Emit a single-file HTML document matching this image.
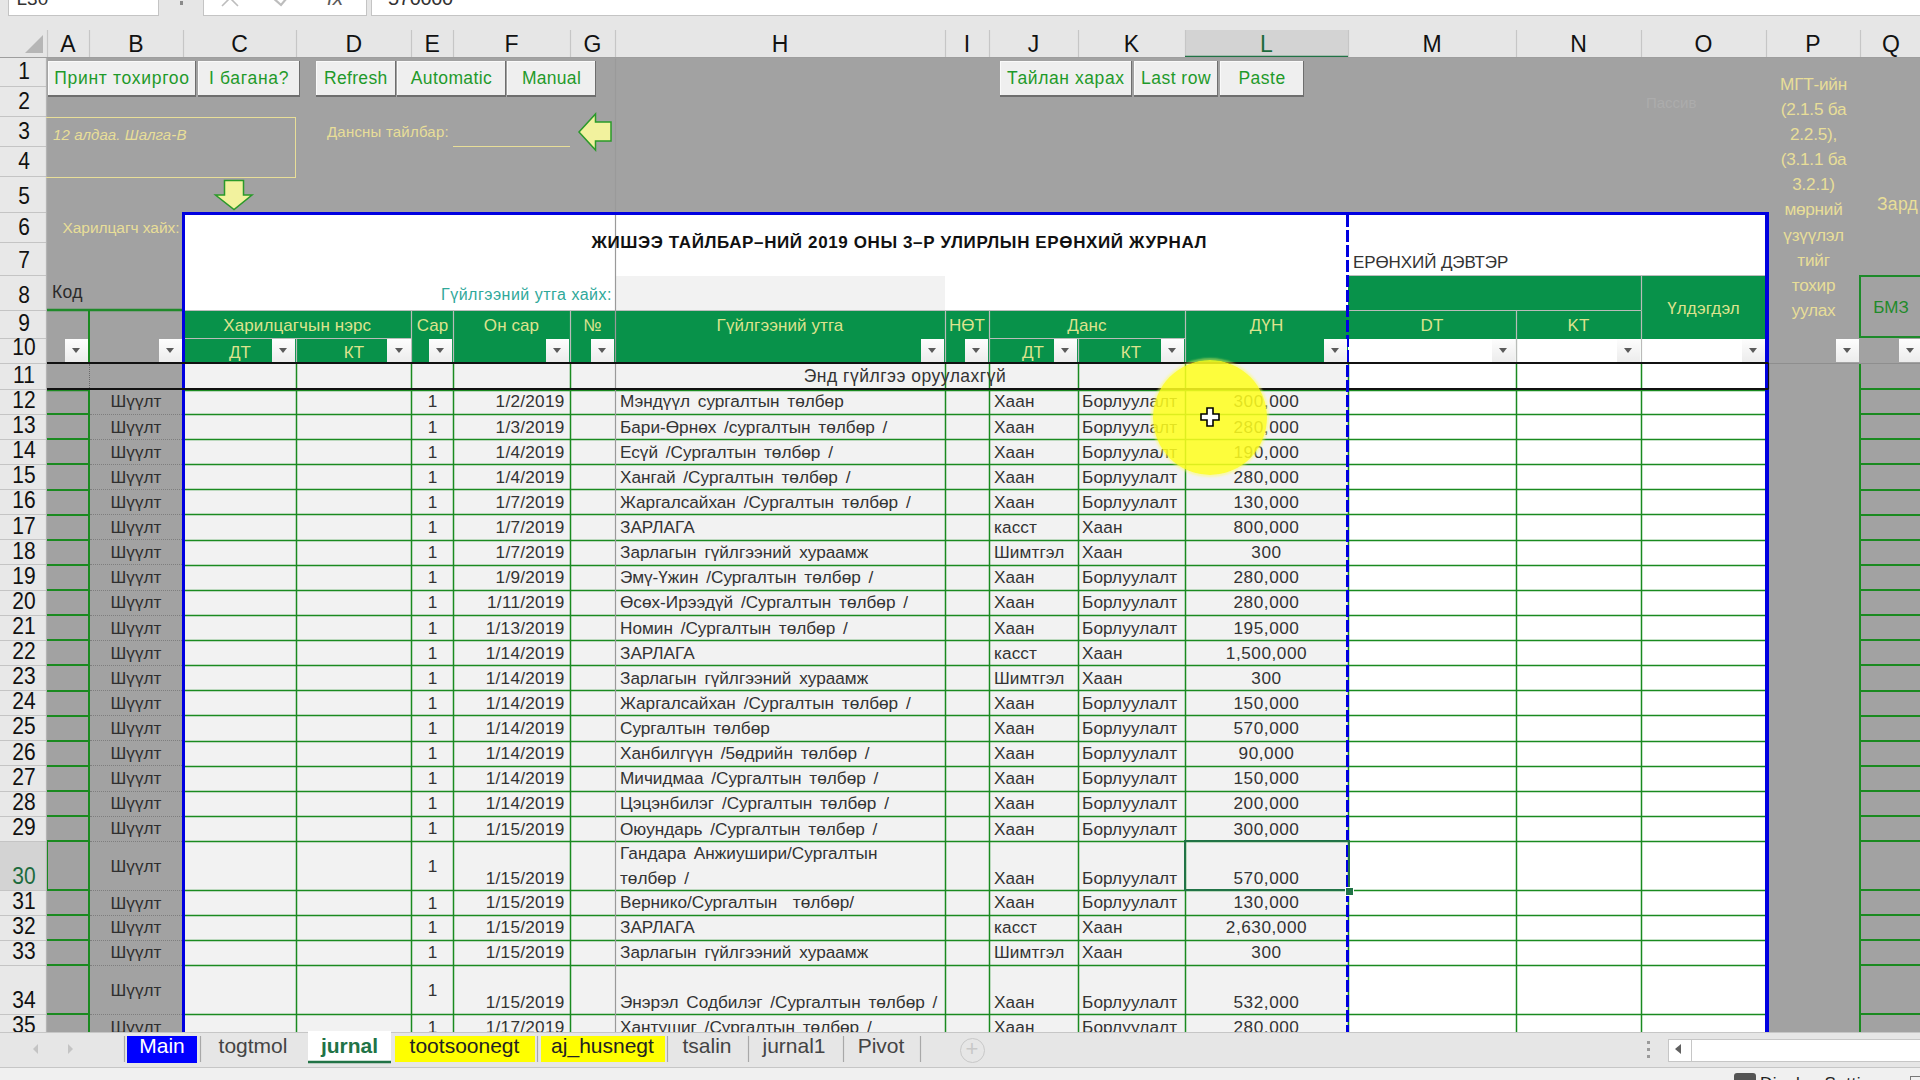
<!DOCTYPE html><html><head><meta charset="utf-8"><style>html,body{margin:0;padding:0;}body{width:1920px;height:1080px;overflow:hidden;position:relative;background:#e6e6e6;font-family:"Liberation Sans", sans-serif;}</style></head><body>
<div style="position:absolute;left:0.0px;top:0.0px;width:1920.0px;height:30.0px;background:#e6e6e6;"></div>
<div style="position:absolute;left:7.5px;top:-6px;width:149px;height:20px;background:#fff;border:1px solid #c4c4c4;"></div>
<div style="position:absolute;left:16.5px;top:-11.1px;font-size:19px;line-height:19px;color:#333;font-weight:normal;letter-spacing:0px;word-spacing:0px;white-space:nowrap;">L30</div>
<div style="position:absolute;left:179.5px;top:1.0px;width:3.5px;height:3.5px;background:#8a8a8a;"></div>
<div style="position:absolute;left:203px;top:-6px;width:162px;height:20px;background:#fff;border:1px solid #c4c4c4;"></div>
<svg style="position:absolute;left:0;top:0" width="400" height="20"><path d="M222,-10 L238,6 M238,-10 L222,6" stroke="#bdbdbd" stroke-width="1.6" fill="none"/><path d="M272,-3 L281,5 L292,-8" stroke="#bdbdbd" stroke-width="2.2" fill="none"/></svg>
<div style="position:absolute;left:327.0px;top:-12.8px;font-size:21px;line-height:21px;color:#5a5a5a;font-weight:normal;letter-spacing:0px;word-spacing:0px;white-space:nowrap;font-family:"Liberation Serif",serif;"><i>fx</i></div>
<div style="position:absolute;left:371px;top:-6px;width:1560px;height:20px;background:#fff;border:1px solid #c4c4c4;"></div>
<div style="position:absolute;left:388.0px;top:-11.9px;font-size:20px;line-height:20px;color:#333;font-weight:normal;letter-spacing:-0.3px;word-spacing:0px;white-space:nowrap;">570000</div>
<div style="position:absolute;left:0.0px;top:30.0px;width:1920.0px;height:28.0px;background:#e6e6e6;"></div>
<div style="position:absolute;left:1185.0px;top:30.0px;width:163.0px;height:28.0px;background:#d3d3d3;"></div>
<svg style="position:absolute;left:0;top:0" width="1920" height="1080"><line x1="89.50" y1="30.00" x2="89.50" y2="58.00" stroke="#c6c6c6" stroke-width="1.2"/></svg>
<div style="position:absolute;left:8.0px;width:120px;text-align:center;top:33.0px;font-size:23px;line-height:23px;color:#111;font-weight:normal;letter-spacing:0px;word-spacing:0px;white-space:nowrap;">A</div>
<svg style="position:absolute;left:0;top:0" width="1920" height="1080"><line x1="183.50" y1="30.00" x2="183.50" y2="58.00" stroke="#c6c6c6" stroke-width="1.2"/></svg>
<div style="position:absolute;left:76.0px;width:120px;text-align:center;top:33.0px;font-size:23px;line-height:23px;color:#111;font-weight:normal;letter-spacing:0px;word-spacing:0px;white-space:nowrap;">B</div>
<svg style="position:absolute;left:0;top:0" width="1920" height="1080"><line x1="296.50" y1="30.00" x2="296.50" y2="58.00" stroke="#c6c6c6" stroke-width="1.2"/></svg>
<div style="position:absolute;left:179.5px;width:120px;text-align:center;top:33.0px;font-size:23px;line-height:23px;color:#111;font-weight:normal;letter-spacing:0px;word-spacing:0px;white-space:nowrap;">C</div>
<svg style="position:absolute;left:0;top:0" width="1920" height="1080"><line x1="411.50" y1="30.00" x2="411.50" y2="58.00" stroke="#c6c6c6" stroke-width="1.2"/></svg>
<div style="position:absolute;left:293.8px;width:120px;text-align:center;top:33.0px;font-size:23px;line-height:23px;color:#111;font-weight:normal;letter-spacing:0px;word-spacing:0px;white-space:nowrap;">D</div>
<svg style="position:absolute;left:0;top:0" width="1920" height="1080"><line x1="453.50" y1="30.00" x2="453.50" y2="58.00" stroke="#c6c6c6" stroke-width="1.2"/></svg>
<div style="position:absolute;left:372.2px;width:120px;text-align:center;top:33.0px;font-size:23px;line-height:23px;color:#111;font-weight:normal;letter-spacing:0px;word-spacing:0px;white-space:nowrap;">E</div>
<svg style="position:absolute;left:0;top:0" width="1920" height="1080"><line x1="570.50" y1="30.00" x2="570.50" y2="58.00" stroke="#c6c6c6" stroke-width="1.2"/></svg>
<div style="position:absolute;left:451.5px;width:120px;text-align:center;top:33.0px;font-size:23px;line-height:23px;color:#111;font-weight:normal;letter-spacing:0px;word-spacing:0px;white-space:nowrap;">F</div>
<svg style="position:absolute;left:0;top:0" width="1920" height="1080"><line x1="615.50" y1="30.00" x2="615.50" y2="58.00" stroke="#c6c6c6" stroke-width="1.2"/></svg>
<div style="position:absolute;left:532.5px;width:120px;text-align:center;top:33.0px;font-size:23px;line-height:23px;color:#111;font-weight:normal;letter-spacing:0px;word-spacing:0px;white-space:nowrap;">G</div>
<svg style="position:absolute;left:0;top:0" width="1920" height="1080"><line x1="945.50" y1="30.00" x2="945.50" y2="58.00" stroke="#c6c6c6" stroke-width="1.2"/></svg>
<div style="position:absolute;left:720.0px;width:120px;text-align:center;top:33.0px;font-size:23px;line-height:23px;color:#111;font-weight:normal;letter-spacing:0px;word-spacing:0px;white-space:nowrap;">H</div>
<svg style="position:absolute;left:0;top:0" width="1920" height="1080"><line x1="989.50" y1="30.00" x2="989.50" y2="58.00" stroke="#c6c6c6" stroke-width="1.2"/></svg>
<div style="position:absolute;left:907.0px;width:120px;text-align:center;top:33.0px;font-size:23px;line-height:23px;color:#111;font-weight:normal;letter-spacing:0px;word-spacing:0px;white-space:nowrap;">I</div>
<svg style="position:absolute;left:0;top:0" width="1920" height="1080"><line x1="1078.50" y1="30.00" x2="1078.50" y2="58.00" stroke="#c6c6c6" stroke-width="1.2"/></svg>
<div style="position:absolute;left:973.5px;width:120px;text-align:center;top:33.0px;font-size:23px;line-height:23px;color:#111;font-weight:normal;letter-spacing:0px;word-spacing:0px;white-space:nowrap;">J</div>
<svg style="position:absolute;left:0;top:0" width="1920" height="1080"><line x1="1185.50" y1="30.00" x2="1185.50" y2="58.00" stroke="#c6c6c6" stroke-width="1.2"/></svg>
<div style="position:absolute;left:1071.5px;width:120px;text-align:center;top:33.0px;font-size:23px;line-height:23px;color:#111;font-weight:normal;letter-spacing:0px;word-spacing:0px;white-space:nowrap;">K</div>
<svg style="position:absolute;left:0;top:0" width="1920" height="1080"><line x1="1348.50" y1="30.00" x2="1348.50" y2="58.00" stroke="#c6c6c6" stroke-width="1.2"/></svg>
<div style="position:absolute;left:1206.5px;width:120px;text-align:center;top:33.0px;font-size:23px;line-height:23px;color:#1d6b3d;font-weight:normal;letter-spacing:0px;word-spacing:0px;white-space:nowrap;">L</div>
<svg style="position:absolute;left:0;top:0" width="1920" height="1080"><line x1="1516.50" y1="30.00" x2="1516.50" y2="58.00" stroke="#c6c6c6" stroke-width="1.2"/></svg>
<div style="position:absolute;left:1372.0px;width:120px;text-align:center;top:33.0px;font-size:23px;line-height:23px;color:#111;font-weight:normal;letter-spacing:0px;word-spacing:0px;white-space:nowrap;">M</div>
<svg style="position:absolute;left:0;top:0" width="1920" height="1080"><line x1="1641.50" y1="30.00" x2="1641.50" y2="58.00" stroke="#c6c6c6" stroke-width="1.2"/></svg>
<div style="position:absolute;left:1518.5px;width:120px;text-align:center;top:33.0px;font-size:23px;line-height:23px;color:#111;font-weight:normal;letter-spacing:0px;word-spacing:0px;white-space:nowrap;">N</div>
<svg style="position:absolute;left:0;top:0" width="1920" height="1080"><line x1="1766.50" y1="30.00" x2="1766.50" y2="58.00" stroke="#c6c6c6" stroke-width="1.2"/></svg>
<div style="position:absolute;left:1643.5px;width:120px;text-align:center;top:33.0px;font-size:23px;line-height:23px;color:#111;font-weight:normal;letter-spacing:0px;word-spacing:0px;white-space:nowrap;">O</div>
<svg style="position:absolute;left:0;top:0" width="1920" height="1080"><line x1="1860.50" y1="30.00" x2="1860.50" y2="58.00" stroke="#c6c6c6" stroke-width="1.2"/></svg>
<div style="position:absolute;left:1753.0px;width:120px;text-align:center;top:33.0px;font-size:23px;line-height:23px;color:#111;font-weight:normal;letter-spacing:0px;word-spacing:0px;white-space:nowrap;">P</div>
<svg style="position:absolute;left:0;top:0" width="1920" height="1080"><line x1="1922.50" y1="30.00" x2="1922.50" y2="58.00" stroke="#c6c6c6" stroke-width="1.2"/></svg>
<div style="position:absolute;left:1831.0px;width:120px;text-align:center;top:33.0px;font-size:23px;line-height:23px;color:#111;font-weight:normal;letter-spacing:0px;word-spacing:0px;white-space:nowrap;">Q</div>
<svg style="position:absolute;left:0;top:0" width="1920" height="1080"><line x1="47.50" y1="30.00" x2="47.50" y2="58.00" stroke="#c6c6c6" stroke-width="1.2"/><line x1="1185.00" y1="57.00" x2="1348.00" y2="57.00" stroke="#217346" stroke-width="2.5"/></svg>
<div style="position:absolute;left:25px;top:35px;width:0;height:0;border-left:18px solid transparent;border-bottom:18px solid #b6b6b6;"></div>
<svg style="position:absolute;left:0;top:0" width="1920" height="1080"><line x1="0.00" y1="58.00" x2="1920.00" y2="58.00" stroke="#9e9e9e" stroke-width="2"/></svg>
<div style="position:absolute;left:47.0px;top:58.0px;width:1873.0px;height:974.0px;background:#a2a2a2;"></div>
<div style="position:absolute;left:0.0px;top:58.0px;width:46.5px;height:974.0px;background:#e8e8e8;"></div>
<div style="position:absolute;left:0.0px;top:841.2px;width:46.5px;height:49.2px;background:#d3d3d3;"></div>
<svg style="position:absolute;left:0;top:0" width="1920" height="1080"><line x1="0.00" y1="86.50" x2="46.50" y2="86.50" stroke="#c4c4c4" stroke-width="1.2"/></svg>
<div style="position:absolute;left:-6.0px;width:60px;text-align:center;top:59.9px;font-size:23.3px;line-height:23.3px;color:#111;font-weight:normal;letter-spacing:0px;word-spacing:0px;white-space:nowrap;transform:scaleX(0.9);">1</div>
<svg style="position:absolute;left:0;top:0" width="1920" height="1080"><line x1="0.00" y1="116.50" x2="46.50" y2="116.50" stroke="#c4c4c4" stroke-width="1.2"/></svg>
<div style="position:absolute;left:-6.0px;width:60px;text-align:center;top:89.9px;font-size:23.3px;line-height:23.3px;color:#111;font-weight:normal;letter-spacing:0px;word-spacing:0px;white-space:nowrap;transform:scaleX(0.9);">2</div>
<svg style="position:absolute;left:0;top:0" width="1920" height="1080"><line x1="0.00" y1="146.50" x2="46.50" y2="146.50" stroke="#c4c4c4" stroke-width="1.2"/></svg>
<div style="position:absolute;left:-6.0px;width:60px;text-align:center;top:119.9px;font-size:23.3px;line-height:23.3px;color:#111;font-weight:normal;letter-spacing:0px;word-spacing:0px;white-space:nowrap;transform:scaleX(0.9);">3</div>
<svg style="position:absolute;left:0;top:0" width="1920" height="1080"><line x1="0.00" y1="176.50" x2="46.50" y2="176.50" stroke="#c4c4c4" stroke-width="1.2"/></svg>
<div style="position:absolute;left:-6.0px;width:60px;text-align:center;top:149.9px;font-size:23.3px;line-height:23.3px;color:#111;font-weight:normal;letter-spacing:0px;word-spacing:0px;white-space:nowrap;transform:scaleX(0.9);">4</div>
<svg style="position:absolute;left:0;top:0" width="1920" height="1080"><line x1="0.00" y1="212.50" x2="46.50" y2="212.50" stroke="#c4c4c4" stroke-width="1.2"/></svg>
<div style="position:absolute;left:-6.0px;width:60px;text-align:center;top:185.4px;font-size:23.3px;line-height:23.3px;color:#111;font-weight:normal;letter-spacing:0px;word-spacing:0px;white-space:nowrap;transform:scaleX(0.9);">5</div>
<svg style="position:absolute;left:0;top:0" width="1920" height="1080"><line x1="0.00" y1="242.50" x2="46.50" y2="242.50" stroke="#c4c4c4" stroke-width="1.2"/></svg>
<div style="position:absolute;left:-6.0px;width:60px;text-align:center;top:215.9px;font-size:23.3px;line-height:23.3px;color:#111;font-weight:normal;letter-spacing:0px;word-spacing:0px;white-space:nowrap;transform:scaleX(0.9);">6</div>
<svg style="position:absolute;left:0;top:0" width="1920" height="1080"><line x1="0.00" y1="275.50" x2="46.50" y2="275.50" stroke="#c4c4c4" stroke-width="1.2"/></svg>
<div style="position:absolute;left:-6.0px;width:60px;text-align:center;top:248.9px;font-size:23.3px;line-height:23.3px;color:#111;font-weight:normal;letter-spacing:0px;word-spacing:0px;white-space:nowrap;transform:scaleX(0.9);">7</div>
<svg style="position:absolute;left:0;top:0" width="1920" height="1080"><line x1="0.00" y1="310.50" x2="46.50" y2="310.50" stroke="#c4c4c4" stroke-width="1.2"/></svg>
<div style="position:absolute;left:-6.0px;width:60px;text-align:center;top:283.9px;font-size:23.3px;line-height:23.3px;color:#111;font-weight:normal;letter-spacing:0px;word-spacing:0px;white-space:nowrap;transform:scaleX(0.9);">8</div>
<svg style="position:absolute;left:0;top:0" width="1920" height="1080"><line x1="0.00" y1="338.50" x2="46.50" y2="338.50" stroke="#c4c4c4" stroke-width="1.2"/></svg>
<div style="position:absolute;left:-6.0px;width:60px;text-align:center;top:311.9px;font-size:23.3px;line-height:23.3px;color:#111;font-weight:normal;letter-spacing:0px;word-spacing:0px;white-space:nowrap;transform:scaleX(0.9);">9</div>
<svg style="position:absolute;left:0;top:0" width="1920" height="1080"><line x1="0.00" y1="363.50" x2="46.50" y2="363.50" stroke="#c4c4c4" stroke-width="1.2"/></svg>
<div style="position:absolute;left:-6.0px;width:60px;text-align:center;top:336.4px;font-size:23.3px;line-height:23.3px;color:#111;font-weight:normal;letter-spacing:0px;word-spacing:0px;white-space:nowrap;transform:scaleX(0.9);">10</div>
<svg style="position:absolute;left:0;top:0" width="1920" height="1080"><line x1="0.00" y1="389.50" x2="46.50" y2="389.50" stroke="#c4c4c4" stroke-width="1.2"/></svg>
<div style="position:absolute;left:-6.0px;width:60px;text-align:center;top:363.7px;font-size:23.3px;line-height:23.3px;color:#111;font-weight:normal;letter-spacing:0px;word-spacing:0px;white-space:nowrap;transform:scaleX(0.9);">11</div>
<svg style="position:absolute;left:0;top:0" width="1920" height="1080"><line x1="0.00" y1="414.50" x2="46.50" y2="414.50" stroke="#c4c4c4" stroke-width="1.2"/></svg>
<div style="position:absolute;left:-6.0px;width:60px;text-align:center;top:388.9px;font-size:23.3px;line-height:23.3px;color:#111;font-weight:normal;letter-spacing:0px;word-spacing:0px;white-space:nowrap;transform:scaleX(0.9);">12</div>
<svg style="position:absolute;left:0;top:0" width="1920" height="1080"><line x1="0.00" y1="439.50" x2="46.50" y2="439.50" stroke="#c4c4c4" stroke-width="1.2"/></svg>
<div style="position:absolute;left:-6.0px;width:60px;text-align:center;top:414.0px;font-size:23.3px;line-height:23.3px;color:#111;font-weight:normal;letter-spacing:0px;word-spacing:0px;white-space:nowrap;transform:scaleX(0.9);">13</div>
<svg style="position:absolute;left:0;top:0" width="1920" height="1080"><line x1="0.00" y1="464.50" x2="46.50" y2="464.50" stroke="#c4c4c4" stroke-width="1.2"/></svg>
<div style="position:absolute;left:-6.0px;width:60px;text-align:center;top:439.1px;font-size:23.3px;line-height:23.3px;color:#111;font-weight:normal;letter-spacing:0px;word-spacing:0px;white-space:nowrap;transform:scaleX(0.9);">14</div>
<svg style="position:absolute;left:0;top:0" width="1920" height="1080"><line x1="0.00" y1="489.50" x2="46.50" y2="489.50" stroke="#c4c4c4" stroke-width="1.2"/></svg>
<div style="position:absolute;left:-6.0px;width:60px;text-align:center;top:464.2px;font-size:23.3px;line-height:23.3px;color:#111;font-weight:normal;letter-spacing:0px;word-spacing:0px;white-space:nowrap;transform:scaleX(0.9);">15</div>
<svg style="position:absolute;left:0;top:0" width="1920" height="1080"><line x1="0.00" y1="514.50" x2="46.50" y2="514.50" stroke="#c4c4c4" stroke-width="1.2"/></svg>
<div style="position:absolute;left:-6.0px;width:60px;text-align:center;top:489.4px;font-size:23.3px;line-height:23.3px;color:#111;font-weight:normal;letter-spacing:0px;word-spacing:0px;white-space:nowrap;transform:scaleX(0.9);">16</div>
<svg style="position:absolute;left:0;top:0" width="1920" height="1080"><line x1="0.00" y1="539.50" x2="46.50" y2="539.50" stroke="#c4c4c4" stroke-width="1.2"/></svg>
<div style="position:absolute;left:-6.0px;width:60px;text-align:center;top:514.5px;font-size:23.3px;line-height:23.3px;color:#111;font-weight:normal;letter-spacing:0px;word-spacing:0px;white-space:nowrap;transform:scaleX(0.9);">17</div>
<svg style="position:absolute;left:0;top:0" width="1920" height="1080"><line x1="0.00" y1="564.50" x2="46.50" y2="564.50" stroke="#c4c4c4" stroke-width="1.2"/></svg>
<div style="position:absolute;left:-6.0px;width:60px;text-align:center;top:539.6px;font-size:23.3px;line-height:23.3px;color:#111;font-weight:normal;letter-spacing:0px;word-spacing:0px;white-space:nowrap;transform:scaleX(0.9);">18</div>
<svg style="position:absolute;left:0;top:0" width="1920" height="1080"><line x1="0.00" y1="590.50" x2="46.50" y2="590.50" stroke="#c4c4c4" stroke-width="1.2"/></svg>
<div style="position:absolute;left:-6.0px;width:60px;text-align:center;top:564.7px;font-size:23.3px;line-height:23.3px;color:#111;font-weight:normal;letter-spacing:0px;word-spacing:0px;white-space:nowrap;transform:scaleX(0.9);">19</div>
<svg style="position:absolute;left:0;top:0" width="1920" height="1080"><line x1="0.00" y1="615.50" x2="46.50" y2="615.50" stroke="#c4c4c4" stroke-width="1.2"/></svg>
<div style="position:absolute;left:-6.0px;width:60px;text-align:center;top:589.8px;font-size:23.3px;line-height:23.3px;color:#111;font-weight:normal;letter-spacing:0px;word-spacing:0px;white-space:nowrap;transform:scaleX(0.9);">20</div>
<svg style="position:absolute;left:0;top:0" width="1920" height="1080"><line x1="0.00" y1="640.50" x2="46.50" y2="640.50" stroke="#c4c4c4" stroke-width="1.2"/></svg>
<div style="position:absolute;left:-6.0px;width:60px;text-align:center;top:615.0px;font-size:23.3px;line-height:23.3px;color:#111;font-weight:normal;letter-spacing:0px;word-spacing:0px;white-space:nowrap;transform:scaleX(0.9);">21</div>
<svg style="position:absolute;left:0;top:0" width="1920" height="1080"><line x1="0.00" y1="665.50" x2="46.50" y2="665.50" stroke="#c4c4c4" stroke-width="1.2"/></svg>
<div style="position:absolute;left:-6.0px;width:60px;text-align:center;top:640.1px;font-size:23.3px;line-height:23.3px;color:#111;font-weight:normal;letter-spacing:0px;word-spacing:0px;white-space:nowrap;transform:scaleX(0.9);">22</div>
<svg style="position:absolute;left:0;top:0" width="1920" height="1080"><line x1="0.00" y1="690.50" x2="46.50" y2="690.50" stroke="#c4c4c4" stroke-width="1.2"/></svg>
<div style="position:absolute;left:-6.0px;width:60px;text-align:center;top:665.2px;font-size:23.3px;line-height:23.3px;color:#111;font-weight:normal;letter-spacing:0px;word-spacing:0px;white-space:nowrap;transform:scaleX(0.9);">23</div>
<svg style="position:absolute;left:0;top:0" width="1920" height="1080"><line x1="0.00" y1="715.50" x2="46.50" y2="715.50" stroke="#c4c4c4" stroke-width="1.2"/></svg>
<div style="position:absolute;left:-6.0px;width:60px;text-align:center;top:690.3px;font-size:23.3px;line-height:23.3px;color:#111;font-weight:normal;letter-spacing:0px;word-spacing:0px;white-space:nowrap;transform:scaleX(0.9);">24</div>
<svg style="position:absolute;left:0;top:0" width="1920" height="1080"><line x1="0.00" y1="740.50" x2="46.50" y2="740.50" stroke="#c4c4c4" stroke-width="1.2"/></svg>
<div style="position:absolute;left:-6.0px;width:60px;text-align:center;top:715.4px;font-size:23.3px;line-height:23.3px;color:#111;font-weight:normal;letter-spacing:0px;word-spacing:0px;white-space:nowrap;transform:scaleX(0.9);">25</div>
<svg style="position:absolute;left:0;top:0" width="1920" height="1080"><line x1="0.00" y1="765.50" x2="46.50" y2="765.50" stroke="#c4c4c4" stroke-width="1.2"/></svg>
<div style="position:absolute;left:-6.0px;width:60px;text-align:center;top:740.6px;font-size:23.3px;line-height:23.3px;color:#111;font-weight:normal;letter-spacing:0px;word-spacing:0px;white-space:nowrap;transform:scaleX(0.9);">26</div>
<svg style="position:absolute;left:0;top:0" width="1920" height="1080"><line x1="0.00" y1="791.50" x2="46.50" y2="791.50" stroke="#c4c4c4" stroke-width="1.2"/></svg>
<div style="position:absolute;left:-6.0px;width:60px;text-align:center;top:765.7px;font-size:23.3px;line-height:23.3px;color:#111;font-weight:normal;letter-spacing:0px;word-spacing:0px;white-space:nowrap;transform:scaleX(0.9);">27</div>
<svg style="position:absolute;left:0;top:0" width="1920" height="1080"><line x1="0.00" y1="816.50" x2="46.50" y2="816.50" stroke="#c4c4c4" stroke-width="1.2"/></svg>
<div style="position:absolute;left:-6.0px;width:60px;text-align:center;top:790.8px;font-size:23.3px;line-height:23.3px;color:#111;font-weight:normal;letter-spacing:0px;word-spacing:0px;white-space:nowrap;transform:scaleX(0.9);">28</div>
<svg style="position:absolute;left:0;top:0" width="1920" height="1080"><line x1="0.00" y1="841.50" x2="46.50" y2="841.50" stroke="#c4c4c4" stroke-width="1.2"/></svg>
<div style="position:absolute;left:-6.0px;width:60px;text-align:center;top:815.9px;font-size:23.3px;line-height:23.3px;color:#111;font-weight:normal;letter-spacing:0px;word-spacing:0px;white-space:nowrap;transform:scaleX(0.9);">29</div>
<svg style="position:absolute;left:0;top:0" width="1920" height="1080"><line x1="0.00" y1="890.50" x2="46.50" y2="890.50" stroke="#c4c4c4" stroke-width="1.2"/></svg>
<div style="position:absolute;left:-6.0px;width:60px;text-align:center;top:865.1px;font-size:23.3px;line-height:23.3px;color:#1d6b3d;font-weight:normal;letter-spacing:0px;word-spacing:0px;white-space:nowrap;transform:scaleX(0.9);">30</div>
<svg style="position:absolute;left:0;top:0" width="1920" height="1080"><line x1="0.00" y1="915.50" x2="46.50" y2="915.50" stroke="#c4c4c4" stroke-width="1.2"/></svg>
<div style="position:absolute;left:-6.0px;width:60px;text-align:center;top:889.9px;font-size:23.3px;line-height:23.3px;color:#111;font-weight:normal;letter-spacing:0px;word-spacing:0px;white-space:nowrap;transform:scaleX(0.9);">31</div>
<svg style="position:absolute;left:0;top:0" width="1920" height="1080"><line x1="0.00" y1="940.50" x2="46.50" y2="940.50" stroke="#c4c4c4" stroke-width="1.2"/></svg>
<div style="position:absolute;left:-6.0px;width:60px;text-align:center;top:914.9px;font-size:23.3px;line-height:23.3px;color:#111;font-weight:normal;letter-spacing:0px;word-spacing:0px;white-space:nowrap;transform:scaleX(0.9);">32</div>
<svg style="position:absolute;left:0;top:0" width="1920" height="1080"><line x1="0.00" y1="965.50" x2="46.50" y2="965.50" stroke="#c4c4c4" stroke-width="1.2"/></svg>
<div style="position:absolute;left:-6.0px;width:60px;text-align:center;top:939.9px;font-size:23.3px;line-height:23.3px;color:#111;font-weight:normal;letter-spacing:0px;word-spacing:0px;white-space:nowrap;transform:scaleX(0.9);">33</div>
<svg style="position:absolute;left:0;top:0" width="1920" height="1080"><line x1="0.00" y1="1014.50" x2="46.50" y2="1014.50" stroke="#c4c4c4" stroke-width="1.2"/></svg>
<div style="position:absolute;left:-6.0px;width:60px;text-align:center;top:989.1px;font-size:23.3px;line-height:23.3px;color:#111;font-weight:normal;letter-spacing:0px;word-spacing:0px;white-space:nowrap;transform:scaleX(0.9);">34</div>
<svg style="position:absolute;left:0;top:0" width="1920" height="1080"><line x1="0.00" y1="1039.50" x2="46.50" y2="1039.50" stroke="#c4c4c4" stroke-width="1.2"/></svg>
<div style="position:absolute;left:-6.0px;width:60px;text-align:center;top:1014.2px;font-size:23.3px;line-height:23.3px;color:#111;font-weight:normal;letter-spacing:0px;word-spacing:0px;white-space:nowrap;transform:scaleX(0.9);">35</div>
<svg style="position:absolute;left:0;top:0" width="1920" height="1080"><line x1="46.50" y1="58.00" x2="46.50" y2="1032.00" stroke="#b4b4b4" stroke-width="1.2"/></svg>
<div style="position:absolute;left:183.0px;top:212.0px;width:1583.0px;height:98.5px;background:#ffffff;"></div>
<div style="position:absolute;left:615.0px;top:275.5px;width:330.0px;height:35.0px;background:#f2f2f2;"></div>
<div style="position:absolute;left:1348.0px;top:275.5px;width:418.0px;height:35.0px;background:#08924a;"></div>
<div style="position:absolute;left:183.0px;top:310.5px;width:1165.0px;height:52.5px;background:#08924a;"></div>
<div style="position:absolute;left:1348.0px;top:310.5px;width:418.0px;height:28.0px;background:#08924a;"></div>
<div style="position:absolute;left:1348.0px;top:338.5px;width:418.0px;height:24.5px;background:#ffffff;"></div>
<div style="position:absolute;left:183.0px;top:363.0px;width:1165.0px;height:669.0px;background:#f2f2f2;"></div>
<div style="position:absolute;left:1348.0px;top:363.0px;width:418.0px;height:669.0px;background:#ffffff;"></div>
<svg style="position:absolute;left:0;top:0" width="1920" height="1080"><line x1="183.00" y1="310.50" x2="1348.00" y2="310.50" stroke="#bdbdbd" stroke-width="1.2"/><line x1="1348.00" y1="275.50" x2="1766.00" y2="275.50" stroke="#bdbdbd" stroke-width="1.2"/><line x1="1348.00" y1="310.50" x2="1641.00" y2="310.50" stroke="#b9bcb9" stroke-width="1.2"/><line x1="183.00" y1="338.50" x2="411.50" y2="338.50" stroke="#b9bcb9" stroke-width="1.2"/><line x1="989.00" y1="338.50" x2="1185.00" y2="338.50" stroke="#b9bcb9" stroke-width="1.2"/><line x1="411.50" y1="310.50" x2="411.50" y2="363.00" stroke="#b9bcb9" stroke-width="1.2"/><line x1="453.50" y1="310.50" x2="453.50" y2="363.00" stroke="#b9bcb9" stroke-width="1.2"/><line x1="570.50" y1="310.50" x2="570.50" y2="363.00" stroke="#b9bcb9" stroke-width="1.2"/><line x1="945.50" y1="310.50" x2="945.50" y2="363.00" stroke="#b9bcb9" stroke-width="1.2"/><line x1="989.50" y1="310.50" x2="989.50" y2="363.00" stroke="#b9bcb9" stroke-width="1.2"/><line x1="1185.50" y1="310.50" x2="1185.50" y2="363.00" stroke="#b9bcb9" stroke-width="1.2"/><line x1="1516.50" y1="310.50" x2="1516.50" y2="363.00" stroke="#b9bcb9" stroke-width="1.2"/><line x1="1641.50" y1="310.50" x2="1641.50" y2="363.00" stroke="#b9bcb9" stroke-width="1.2"/><line x1="296.50" y1="338.50" x2="296.50" y2="363.00" stroke="#b9bcb9" stroke-width="1.2"/><line x1="1078.50" y1="338.50" x2="1078.50" y2="363.00" stroke="#b9bcb9" stroke-width="1.2"/><line x1="1641.50" y1="275.50" x2="1641.50" y2="310.50" stroke="#b9bcb9" stroke-width="1.2"/><line x1="1516.50" y1="338.50" x2="1516.50" y2="363.00" stroke="#b9bcb9" stroke-width="1.2"/><line x1="296.50" y1="363.00" x2="296.50" y2="1032.00" stroke="#1a8a20" stroke-width="1.5"/><line x1="411.50" y1="363.00" x2="411.50" y2="1032.00" stroke="#1a8a20" stroke-width="1.5"/><line x1="453.50" y1="363.00" x2="453.50" y2="1032.00" stroke="#1a8a20" stroke-width="1.5"/><line x1="570.50" y1="363.00" x2="570.50" y2="1032.00" stroke="#1a8a20" stroke-width="1.5"/><line x1="945.50" y1="363.00" x2="945.50" y2="1032.00" stroke="#1a8a20" stroke-width="1.5"/><line x1="989.50" y1="363.00" x2="989.50" y2="1032.00" stroke="#1a8a20" stroke-width="1.5"/><line x1="1078.50" y1="363.00" x2="1078.50" y2="1032.00" stroke="#1a8a20" stroke-width="1.5"/><line x1="1185.50" y1="363.00" x2="1185.50" y2="1032.00" stroke="#1a8a20" stroke-width="1.5"/><line x1="1348.50" y1="363.00" x2="1348.50" y2="1032.00" stroke="#1a8a20" stroke-width="1.5"/><line x1="1516.50" y1="363.00" x2="1516.50" y2="1032.00" stroke="#1a8a20" stroke-width="1.5"/><line x1="1641.50" y1="363.00" x2="1641.50" y2="1032.00" stroke="#1a8a20" stroke-width="1.5"/><line x1="183.00" y1="414.50" x2="1766.00" y2="414.50" stroke="#1a8a20" stroke-width="1.5"/><line x1="183.00" y1="439.50" x2="1766.00" y2="439.50" stroke="#1a8a20" stroke-width="1.5"/><line x1="183.00" y1="464.50" x2="1766.00" y2="464.50" stroke="#1a8a20" stroke-width="1.5"/><line x1="183.00" y1="489.50" x2="1766.00" y2="489.50" stroke="#1a8a20" stroke-width="1.5"/><line x1="183.00" y1="514.50" x2="1766.00" y2="514.50" stroke="#1a8a20" stroke-width="1.5"/><line x1="183.00" y1="540.50" x2="1766.00" y2="540.50" stroke="#1a8a20" stroke-width="1.5"/><line x1="183.00" y1="565.50" x2="1766.00" y2="565.50" stroke="#1a8a20" stroke-width="1.5"/><line x1="183.00" y1="590.50" x2="1766.00" y2="590.50" stroke="#1a8a20" stroke-width="1.5"/><line x1="183.00" y1="615.50" x2="1766.00" y2="615.50" stroke="#1a8a20" stroke-width="1.5"/><line x1="183.00" y1="640.50" x2="1766.00" y2="640.50" stroke="#1a8a20" stroke-width="1.5"/><line x1="183.00" y1="665.50" x2="1766.00" y2="665.50" stroke="#1a8a20" stroke-width="1.5"/><line x1="183.00" y1="690.50" x2="1766.00" y2="690.50" stroke="#1a8a20" stroke-width="1.5"/><line x1="183.00" y1="715.50" x2="1766.00" y2="715.50" stroke="#1a8a20" stroke-width="1.5"/><line x1="183.00" y1="741.50" x2="1766.00" y2="741.50" stroke="#1a8a20" stroke-width="1.5"/><line x1="183.00" y1="766.50" x2="1766.00" y2="766.50" stroke="#1a8a20" stroke-width="1.5"/><line x1="183.00" y1="791.50" x2="1766.00" y2="791.50" stroke="#1a8a20" stroke-width="1.5"/><line x1="183.00" y1="816.50" x2="1766.00" y2="816.50" stroke="#1a8a20" stroke-width="1.5"/><line x1="183.00" y1="841.50" x2="1766.00" y2="841.50" stroke="#1a8a20" stroke-width="1.5"/><line x1="183.00" y1="890.50" x2="1766.00" y2="890.50" stroke="#1a8a20" stroke-width="1.5"/><line x1="183.00" y1="915.50" x2="1766.00" y2="915.50" stroke="#1a8a20" stroke-width="1.5"/><line x1="183.00" y1="940.50" x2="1766.00" y2="940.50" stroke="#1a8a20" stroke-width="1.5"/><line x1="183.00" y1="965.50" x2="1766.00" y2="965.50" stroke="#1a8a20" stroke-width="1.5"/><line x1="183.00" y1="1014.50" x2="1766.00" y2="1014.50" stroke="#1a8a20" stroke-width="1.5"/><line x1="183.00" y1="390.50" x2="1766.00" y2="390.50" stroke="#1a8a20" stroke-width="1.5"/><line x1="615.50" y1="58.50" x2="615.50" y2="1032.00" stroke="#9a9a9a" stroke-width="1.2"/><line x1="47.00" y1="310.00" x2="183.00" y2="310.00" stroke="#1f8a2a" stroke-width="2.5"/><line x1="89.00" y1="310.50" x2="89.00" y2="363.00" stroke="#1a8a20" stroke-width="2"/><line x1="89.00" y1="389.00" x2="89.00" y2="1032.00" stroke="#1a8a20" stroke-width="2"/><line x1="47.00" y1="414.00" x2="89.00" y2="414.00" stroke="#1a8a20" stroke-width="2"/></svg>
<div style="position:absolute;left:90.0px;top:413.7px;width:92.0px;height:0;border-top:1px dotted #7e7e7e;"></div>
<svg style="position:absolute;left:0;top:0" width="1920" height="1080"><line x1="47.00" y1="439.00" x2="89.00" y2="439.00" stroke="#1a8a20" stroke-width="2"/></svg>
<div style="position:absolute;left:90.0px;top:438.8px;width:92.0px;height:0;border-top:1px dotted #7e7e7e;"></div>
<svg style="position:absolute;left:0;top:0" width="1920" height="1080"><line x1="47.00" y1="464.00" x2="89.00" y2="464.00" stroke="#1a8a20" stroke-width="2"/></svg>
<div style="position:absolute;left:90.0px;top:463.9px;width:92.0px;height:0;border-top:1px dotted #7e7e7e;"></div>
<svg style="position:absolute;left:0;top:0" width="1920" height="1080"><line x1="47.00" y1="490.00" x2="89.00" y2="490.00" stroke="#1a8a20" stroke-width="2"/></svg>
<div style="position:absolute;left:90.0px;top:489.1px;width:92.0px;height:0;border-top:1px dotted #7e7e7e;"></div>
<svg style="position:absolute;left:0;top:0" width="1920" height="1080"><line x1="47.00" y1="515.00" x2="89.00" y2="515.00" stroke="#1a8a20" stroke-width="2"/></svg>
<div style="position:absolute;left:90.0px;top:514.2px;width:92.0px;height:0;border-top:1px dotted #7e7e7e;"></div>
<svg style="position:absolute;left:0;top:0" width="1920" height="1080"><line x1="47.00" y1="540.00" x2="89.00" y2="540.00" stroke="#1a8a20" stroke-width="2"/></svg>
<div style="position:absolute;left:90.0px;top:539.3px;width:92.0px;height:0;border-top:1px dotted #7e7e7e;"></div>
<svg style="position:absolute;left:0;top:0" width="1920" height="1080"><line x1="47.00" y1="565.00" x2="89.00" y2="565.00" stroke="#1a8a20" stroke-width="2"/></svg>
<div style="position:absolute;left:90.0px;top:564.4px;width:92.0px;height:0;border-top:1px dotted #7e7e7e;"></div>
<svg style="position:absolute;left:0;top:0" width="1920" height="1080"><line x1="47.00" y1="590.00" x2="89.00" y2="590.00" stroke="#1a8a20" stroke-width="2"/></svg>
<div style="position:absolute;left:90.0px;top:589.5px;width:92.0px;height:0;border-top:1px dotted #7e7e7e;"></div>
<svg style="position:absolute;left:0;top:0" width="1920" height="1080"><line x1="47.00" y1="615.00" x2="89.00" y2="615.00" stroke="#1a8a20" stroke-width="2"/></svg>
<div style="position:absolute;left:90.0px;top:614.7px;width:92.0px;height:0;border-top:1px dotted #7e7e7e;"></div>
<svg style="position:absolute;left:0;top:0" width="1920" height="1080"><line x1="47.00" y1="640.00" x2="89.00" y2="640.00" stroke="#1a8a20" stroke-width="2"/></svg>
<div style="position:absolute;left:90.0px;top:639.8px;width:92.0px;height:0;border-top:1px dotted #7e7e7e;"></div>
<svg style="position:absolute;left:0;top:0" width="1920" height="1080"><line x1="47.00" y1="665.00" x2="89.00" y2="665.00" stroke="#1a8a20" stroke-width="2"/></svg>
<div style="position:absolute;left:90.0px;top:664.9px;width:92.0px;height:0;border-top:1px dotted #7e7e7e;"></div>
<svg style="position:absolute;left:0;top:0" width="1920" height="1080"><line x1="47.00" y1="691.00" x2="89.00" y2="691.00" stroke="#1a8a20" stroke-width="2"/></svg>
<div style="position:absolute;left:90.0px;top:690.0px;width:92.0px;height:0;border-top:1px dotted #7e7e7e;"></div>
<svg style="position:absolute;left:0;top:0" width="1920" height="1080"><line x1="47.00" y1="716.00" x2="89.00" y2="716.00" stroke="#1a8a20" stroke-width="2"/></svg>
<div style="position:absolute;left:90.0px;top:715.1px;width:92.0px;height:0;border-top:1px dotted #7e7e7e;"></div>
<svg style="position:absolute;left:0;top:0" width="1920" height="1080"><line x1="47.00" y1="741.00" x2="89.00" y2="741.00" stroke="#1a8a20" stroke-width="2"/></svg>
<div style="position:absolute;left:90.0px;top:740.3px;width:92.0px;height:0;border-top:1px dotted #7e7e7e;"></div>
<svg style="position:absolute;left:0;top:0" width="1920" height="1080"><line x1="47.00" y1="766.00" x2="89.00" y2="766.00" stroke="#1a8a20" stroke-width="2"/></svg>
<div style="position:absolute;left:90.0px;top:765.4px;width:92.0px;height:0;border-top:1px dotted #7e7e7e;"></div>
<svg style="position:absolute;left:0;top:0" width="1920" height="1080"><line x1="47.00" y1="791.00" x2="89.00" y2="791.00" stroke="#1a8a20" stroke-width="2"/></svg>
<div style="position:absolute;left:90.0px;top:790.5px;width:92.0px;height:0;border-top:1px dotted #7e7e7e;"></div>
<svg style="position:absolute;left:0;top:0" width="1920" height="1080"><line x1="47.00" y1="816.00" x2="89.00" y2="816.00" stroke="#1a8a20" stroke-width="2"/></svg>
<div style="position:absolute;left:90.0px;top:815.6px;width:92.0px;height:0;border-top:1px dotted #7e7e7e;"></div>
<svg style="position:absolute;left:0;top:0" width="1920" height="1080"><line x1="47.00" y1="841.00" x2="89.00" y2="841.00" stroke="#1a8a20" stroke-width="2"/></svg>
<div style="position:absolute;left:90.0px;top:840.7px;width:92.0px;height:0;border-top:1px dotted #7e7e7e;"></div>
<svg style="position:absolute;left:0;top:0" width="1920" height="1080"><line x1="47.00" y1="890.00" x2="89.00" y2="890.00" stroke="#1a8a20" stroke-width="2"/></svg>
<div style="position:absolute;left:90.0px;top:889.9px;width:92.0px;height:0;border-top:1px dotted #7e7e7e;"></div>
<svg style="position:absolute;left:0;top:0" width="1920" height="1080"><line x1="47.00" y1="915.00" x2="89.00" y2="915.00" stroke="#1a8a20" stroke-width="2"/></svg>
<div style="position:absolute;left:90.0px;top:914.7px;width:92.0px;height:0;border-top:1px dotted #7e7e7e;"></div>
<svg style="position:absolute;left:0;top:0" width="1920" height="1080"><line x1="47.00" y1="940.00" x2="89.00" y2="940.00" stroke="#1a8a20" stroke-width="2"/></svg>
<div style="position:absolute;left:90.0px;top:939.7px;width:92.0px;height:0;border-top:1px dotted #7e7e7e;"></div>
<svg style="position:absolute;left:0;top:0" width="1920" height="1080"><line x1="47.00" y1="965.00" x2="89.00" y2="965.00" stroke="#1a8a20" stroke-width="2"/></svg>
<div style="position:absolute;left:90.0px;top:964.7px;width:92.0px;height:0;border-top:1px dotted #7e7e7e;"></div>
<svg style="position:absolute;left:0;top:0" width="1920" height="1080"><line x1="47.00" y1="1014.00" x2="89.00" y2="1014.00" stroke="#1a8a20" stroke-width="2"/></svg>
<div style="position:absolute;left:90.0px;top:1013.9px;width:92.0px;height:0;border-top:1px dotted #7e7e7e;"></div>
<svg style="position:absolute;left:0;top:0" width="1920" height="1080"><line x1="47.00" y1="390.50" x2="89.00" y2="390.50" stroke="#1a8a20" stroke-width="1.5"/></svg>
<div style="position:absolute;left:46.5px;top:840.2px;width:41px;height:49.2px;border:1.5px solid #1a8a20;"></div>
<svg style="position:absolute;left:0;top:0" width="1920" height="1080"><line x1="1860.00" y1="389.00" x2="1920.00" y2="389.00" stroke="#1a8a20" stroke-width="2"/><line x1="1860.00" y1="414.00" x2="1920.00" y2="414.00" stroke="#1a8a20" stroke-width="2"/><line x1="1860.00" y1="439.00" x2="1920.00" y2="439.00" stroke="#1a8a20" stroke-width="2"/><line x1="1860.00" y1="464.00" x2="1920.00" y2="464.00" stroke="#1a8a20" stroke-width="2"/><line x1="1860.00" y1="490.00" x2="1920.00" y2="490.00" stroke="#1a8a20" stroke-width="2"/><line x1="1860.00" y1="515.00" x2="1920.00" y2="515.00" stroke="#1a8a20" stroke-width="2"/><line x1="1860.00" y1="540.00" x2="1920.00" y2="540.00" stroke="#1a8a20" stroke-width="2"/><line x1="1860.00" y1="565.00" x2="1920.00" y2="565.00" stroke="#1a8a20" stroke-width="2"/><line x1="1860.00" y1="590.00" x2="1920.00" y2="590.00" stroke="#1a8a20" stroke-width="2"/><line x1="1860.00" y1="615.00" x2="1920.00" y2="615.00" stroke="#1a8a20" stroke-width="2"/><line x1="1860.00" y1="640.00" x2="1920.00" y2="640.00" stroke="#1a8a20" stroke-width="2"/><line x1="1860.00" y1="665.00" x2="1920.00" y2="665.00" stroke="#1a8a20" stroke-width="2"/><line x1="1860.00" y1="691.00" x2="1920.00" y2="691.00" stroke="#1a8a20" stroke-width="2"/><line x1="1860.00" y1="716.00" x2="1920.00" y2="716.00" stroke="#1a8a20" stroke-width="2"/><line x1="1860.00" y1="741.00" x2="1920.00" y2="741.00" stroke="#1a8a20" stroke-width="2"/><line x1="1860.00" y1="766.00" x2="1920.00" y2="766.00" stroke="#1a8a20" stroke-width="2"/><line x1="1860.00" y1="791.00" x2="1920.00" y2="791.00" stroke="#1a8a20" stroke-width="2"/><line x1="1860.00" y1="816.00" x2="1920.00" y2="816.00" stroke="#1a8a20" stroke-width="2"/><line x1="1860.00" y1="841.00" x2="1920.00" y2="841.00" stroke="#1a8a20" stroke-width="2"/><line x1="1860.00" y1="890.00" x2="1920.00" y2="890.00" stroke="#1a8a20" stroke-width="2"/><line x1="1860.00" y1="915.00" x2="1920.00" y2="915.00" stroke="#1a8a20" stroke-width="2"/><line x1="1860.00" y1="940.00" x2="1920.00" y2="940.00" stroke="#1a8a20" stroke-width="2"/><line x1="1860.00" y1="965.00" x2="1920.00" y2="965.00" stroke="#1a8a20" stroke-width="2"/><line x1="1860.00" y1="1014.00" x2="1920.00" y2="1014.00" stroke="#1a8a20" stroke-width="2"/><line x1="1860.00" y1="363.00" x2="1860.00" y2="1032.00" stroke="#1a8a20" stroke-width="2"/><line x1="1766.00" y1="363.50" x2="1920.00" y2="363.50" stroke="#8e8e8e" stroke-width="1"/></svg>
<div style="position:absolute;left:1859.0px;top:274.5px;width:70px;height:59.5px;border:2px solid #1d8a2a;"></div>
<div style="position:absolute;left:182.0px;top:211.5px;width:1586.5px;height:3.0px;background:#0000e0;"></div>
<div style="position:absolute;left:182.0px;top:211.5px;width:3.0px;height:820.5px;background:#0000e0;"></div>
<div style="position:absolute;left:1765.0px;top:211.5px;width:3.5px;height:820.5px;background:#0000e0;"></div>
<svg style="position:absolute;left:0;top:0" width="1920" height="1080"><line x1="47.00" y1="363.00" x2="1768.50" y2="363.00" stroke="#111" stroke-width="2"/><line x1="47.00" y1="389.00" x2="1768.50" y2="389.00" stroke="#111" stroke-width="2"/><line x1="1768.50" y1="363.00" x2="1768.50" y2="389.00" stroke="#111" stroke-width="1.2"/></svg>
<div style="position:absolute;left:88.5px;top:364.0px;width:0;height:24.0px;border-left:1px dotted #6a6a6a;"></div>
<div style="position:absolute;left:1346.0px;top:215.0px;width:3px;height:817.0px;background:repeating-linear-gradient(to bottom,#0000e0 0px,#0000e0 12px,transparent 12px,transparent 15px);"></div>
<div style="position:absolute;left:64.5px;top:339.0px;width:23.5px;height:23px;background:linear-gradient(#fdfdfd,#ececec);"></div>
<div style="position:absolute;left:72.0px;top:348.0px;width:0;height:0;border-left:4.5px solid transparent;border-right:4.5px solid transparent;border-top:5px solid #5a5a5a;"></div>
<div style="position:absolute;left:158.5px;top:339.0px;width:23.5px;height:23px;background:linear-gradient(#fdfdfd,#ececec);"></div>
<div style="position:absolute;left:166.0px;top:348.0px;width:0;height:0;border-left:4.5px solid transparent;border-right:4.5px solid transparent;border-top:5px solid #5a5a5a;"></div>
<div style="position:absolute;left:271.5px;top:339.0px;width:23.5px;height:23px;background:linear-gradient(#fdfdfd,#ececec);"></div>
<div style="position:absolute;left:279.0px;top:348.0px;width:0;height:0;border-left:4.5px solid transparent;border-right:4.5px solid transparent;border-top:5px solid #5a5a5a;"></div>
<div style="position:absolute;left:387.0px;top:339.0px;width:23.5px;height:23px;background:linear-gradient(#fdfdfd,#ececec);"></div>
<div style="position:absolute;left:394.5px;top:348.0px;width:0;height:0;border-left:4.5px solid transparent;border-right:4.5px solid transparent;border-top:5px solid #5a5a5a;"></div>
<div style="position:absolute;left:428.5px;top:339.0px;width:23.5px;height:23px;background:linear-gradient(#fdfdfd,#ececec);"></div>
<div style="position:absolute;left:436.0px;top:348.0px;width:0;height:0;border-left:4.5px solid transparent;border-right:4.5px solid transparent;border-top:5px solid #5a5a5a;"></div>
<div style="position:absolute;left:545.5px;top:339.0px;width:23.5px;height:23px;background:linear-gradient(#fdfdfd,#ececec);"></div>
<div style="position:absolute;left:553.0px;top:348.0px;width:0;height:0;border-left:4.5px solid transparent;border-right:4.5px solid transparent;border-top:5px solid #5a5a5a;"></div>
<div style="position:absolute;left:590.5px;top:339.0px;width:23.5px;height:23px;background:linear-gradient(#fdfdfd,#ececec);"></div>
<div style="position:absolute;left:598.0px;top:348.0px;width:0;height:0;border-left:4.5px solid transparent;border-right:4.5px solid transparent;border-top:5px solid #5a5a5a;"></div>
<div style="position:absolute;left:920.5px;top:339.0px;width:23.5px;height:23px;background:linear-gradient(#fdfdfd,#ececec);"></div>
<div style="position:absolute;left:928.0px;top:348.0px;width:0;height:0;border-left:4.5px solid transparent;border-right:4.5px solid transparent;border-top:5px solid #5a5a5a;"></div>
<div style="position:absolute;left:964.5px;top:339.0px;width:23.5px;height:23px;background:linear-gradient(#fdfdfd,#ececec);"></div>
<div style="position:absolute;left:972.0px;top:348.0px;width:0;height:0;border-left:4.5px solid transparent;border-right:4.5px solid transparent;border-top:5px solid #5a5a5a;"></div>
<div style="position:absolute;left:1053.5px;top:339.0px;width:23.5px;height:23px;background:linear-gradient(#fdfdfd,#ececec);"></div>
<div style="position:absolute;left:1061.0px;top:348.0px;width:0;height:0;border-left:4.5px solid transparent;border-right:4.5px solid transparent;border-top:5px solid #5a5a5a;"></div>
<div style="position:absolute;left:1160.5px;top:339.0px;width:23.5px;height:23px;background:linear-gradient(#fdfdfd,#ececec);"></div>
<div style="position:absolute;left:1168.0px;top:348.0px;width:0;height:0;border-left:4.5px solid transparent;border-right:4.5px solid transparent;border-top:5px solid #5a5a5a;"></div>
<div style="position:absolute;left:1323.5px;top:339.0px;width:23.5px;height:23px;background:linear-gradient(#fdfdfd,#ececec);"></div>
<div style="position:absolute;left:1331.0px;top:348.0px;width:0;height:0;border-left:4.5px solid transparent;border-right:4.5px solid transparent;border-top:5px solid #5a5a5a;"></div>
<div style="position:absolute;left:1491.5px;top:339.0px;width:23.5px;height:23px;background:linear-gradient(#fdfdfd,#ececec);"></div>
<div style="position:absolute;left:1499.0px;top:348.0px;width:0;height:0;border-left:4.5px solid transparent;border-right:4.5px solid transparent;border-top:5px solid #5a5a5a;"></div>
<div style="position:absolute;left:1616.5px;top:339.0px;width:23.5px;height:23px;background:linear-gradient(#fdfdfd,#ececec);"></div>
<div style="position:absolute;left:1624.0px;top:348.0px;width:0;height:0;border-left:4.5px solid transparent;border-right:4.5px solid transparent;border-top:5px solid #5a5a5a;"></div>
<div style="position:absolute;left:1741.5px;top:339.0px;width:23.5px;height:23px;background:linear-gradient(#fdfdfd,#ececec);"></div>
<div style="position:absolute;left:1749.0px;top:348.0px;width:0;height:0;border-left:4.5px solid transparent;border-right:4.5px solid transparent;border-top:5px solid #5a5a5a;"></div>
<div style="position:absolute;left:1835.5px;top:339.0px;width:23.5px;height:23px;background:linear-gradient(#fdfdfd,#ececec);"></div>
<div style="position:absolute;left:1843.0px;top:348.0px;width:0;height:0;border-left:4.5px solid transparent;border-right:4.5px solid transparent;border-top:5px solid #5a5a5a;"></div>
<div style="position:absolute;left:1898.5px;top:339.0px;width:23.5px;height:23px;background:linear-gradient(#fdfdfd,#ececec);"></div>
<div style="position:absolute;left:1906.0px;top:348.0px;width:0;height:0;border-left:4.5px solid transparent;border-right:4.5px solid transparent;border-top:5px solid #5a5a5a;"></div>
<div style="position:absolute;left:48.0px;top:61px;width:146.5px;height:34px;background:#efefef;border-right:1.5px solid #6e6e6e;border-bottom:2px solid #6e6e6e;box-shadow:inset 1px 1px 0 #fafafa;"></div>
<div style="position:absolute;left:28.0px;width:188px;text-align:center;top:70.2px;font-size:17.5px;line-height:17.5px;color:#1f9a2a;font-weight:normal;letter-spacing:0.7px;word-spacing:0px;white-space:nowrap;">Принт тохиргоо</div>
<div style="position:absolute;left:198.0px;top:61px;width:100.5px;height:34px;background:#efefef;border-right:1.5px solid #6e6e6e;border-bottom:2px solid #6e6e6e;box-shadow:inset 1px 1px 0 #fafafa;"></div>
<div style="position:absolute;left:178.0px;width:142px;text-align:center;top:70.2px;font-size:17.5px;line-height:17.5px;color:#1f9a2a;font-weight:normal;letter-spacing:0.7px;word-spacing:0px;white-space:nowrap;">I багана?</div>
<div style="position:absolute;left:315.5px;top:61px;width:79.0px;height:34px;background:#efefef;border-right:1.5px solid #6e6e6e;border-bottom:2px solid #6e6e6e;box-shadow:inset 1px 1px 0 #fafafa;"></div>
<div style="position:absolute;left:295.8px;width:120px;text-align:center;top:70.2px;font-size:17.5px;line-height:17.5px;color:#1f9a2a;font-weight:normal;letter-spacing:0.3px;word-spacing:0px;white-space:nowrap;">Refresh</div>
<div style="position:absolute;left:397.0px;top:61px;width:107.5px;height:34px;background:#efefef;border-right:1.5px solid #6e6e6e;border-bottom:2px solid #6e6e6e;box-shadow:inset 1px 1px 0 #fafafa;"></div>
<div style="position:absolute;left:377.0px;width:149px;text-align:center;top:70.2px;font-size:17.5px;line-height:17.5px;color:#1f9a2a;font-weight:normal;letter-spacing:0.4px;word-spacing:0px;white-space:nowrap;">Automatic</div>
<div style="position:absolute;left:507.0px;top:61px;width:87.5px;height:34px;background:#efefef;border-right:1.5px solid #6e6e6e;border-bottom:2px solid #6e6e6e;box-shadow:inset 1px 1px 0 #fafafa;"></div>
<div style="position:absolute;left:487.0px;width:129px;text-align:center;top:70.2px;font-size:17.5px;line-height:17.5px;color:#1f9a2a;font-weight:normal;letter-spacing:0.3px;word-spacing:0px;white-space:nowrap;">Manual</div>
<div style="position:absolute;left:999.5px;top:61px;width:131.0px;height:34px;background:#efefef;border-right:1.5px solid #6e6e6e;border-bottom:2px solid #6e6e6e;box-shadow:inset 1px 1px 0 #fafafa;"></div>
<div style="position:absolute;left:979.8px;width:172px;text-align:center;top:70.2px;font-size:17.5px;line-height:17.5px;color:#1f9a2a;font-weight:normal;letter-spacing:0.6px;word-spacing:0px;white-space:nowrap;">Тайлан харах</div>
<div style="position:absolute;left:1134.0px;top:61px;width:82.5px;height:34px;background:#efefef;border-right:1.5px solid #6e6e6e;border-bottom:2px solid #6e6e6e;box-shadow:inset 1px 1px 0 #fafafa;"></div>
<div style="position:absolute;left:1114.0px;width:124px;text-align:center;top:70.2px;font-size:17.5px;line-height:17.5px;color:#1f9a2a;font-weight:normal;letter-spacing:0.5px;word-spacing:0px;white-space:nowrap;">Last row</div>
<div style="position:absolute;left:1220.0px;top:61px;width:82.5px;height:34px;background:#efefef;border-right:1.5px solid #6e6e6e;border-bottom:2px solid #6e6e6e;box-shadow:inset 1px 1px 0 #fafafa;"></div>
<div style="position:absolute;left:1200.0px;width:124px;text-align:center;top:70.2px;font-size:17.5px;line-height:17.5px;color:#1f9a2a;font-weight:normal;letter-spacing:0.5px;word-spacing:0px;white-space:nowrap;">Paste</div>
<div style="position:absolute;left:46px;top:116.5px;width:249px;height:59px;border:1px solid #e8de98;border-left:none;"></div>
<div style="position:absolute;left:53.0px;top:127.3px;font-size:15px;line-height:15px;color:#e8de98;font-weight:normal;letter-spacing:0.1px;word-spacing:0px;white-space:nowrap;font-style:italic;">12 алдаа. Шалга-В</div>
<div style="position:absolute;left:327.0px;top:124.3px;font-size:15px;line-height:15px;color:#e8de98;font-weight:normal;letter-spacing:0.2px;word-spacing:0px;white-space:nowrap;">Дансны тайлбар:</div>
<svg style="position:absolute;left:0;top:0" width="1920" height="1080"><line x1="453.00" y1="146.50" x2="570.00" y2="146.50" stroke="#e8de98" stroke-width="1"/></svg>
<div style="position:absolute;left:62.5px;top:219.9px;font-size:15.5px;line-height:15.5px;color:#e8de98;font-weight:normal;letter-spacing:-0.05px;word-spacing:0px;white-space:nowrap;">Харилцагч хайх:</div>
<svg style="position:absolute;left:0;top:0" width="1920" height="300"><polygon points="224.5,180.5 243.5,180.5 243.5,195 252,195 234,209.5 215.5,195 224.5,195" fill="#f2f29e" stroke="#2a9a2a" stroke-width="1.5"/><polygon points="611,122 595.5,122 595.5,114 579,132 595.5,150 595.5,141 611,141" fill="#f2f29e" stroke="#2a9a2a" stroke-width="1.5"/></svg>
<div style="position:absolute;left:1646.0px;top:95.3px;font-size:15px;line-height:15px;color:#acacac;font-weight:normal;letter-spacing:0px;word-spacing:0px;white-space:nowrap;">Пассив</div>
<div style="position:absolute;left:591.5px;top:234.4px;font-size:17px;line-height:17px;color:#111;font-weight:bold;letter-spacing:0.62px;word-spacing:0px;white-space:nowrap;">ЖИШЭЭ ТАЙЛБАР–НИЙ 2019 ОНЫ 3–Р УЛИРЛЫН ЕРӨНХИЙ ЖУРНАЛ</div>
<div style="position:absolute;left:1353.0px;top:253.6px;font-size:17px;line-height:17px;color:#333;font-weight:normal;letter-spacing:-0.1px;word-spacing:0px;white-space:nowrap;">ЕРӨНХИЙ ДЭВТЭР</div>
<div style="position:absolute;left:12.0px;width:600px;text-align:right;top:286.5px;font-size:16px;line-height:16px;color:#2fa89a;font-weight:normal;letter-spacing:0.5px;word-spacing:0px;white-space:nowrap;">Гүйлгээний утга хайх:</div>
<div style="position:absolute;left:52.0px;top:284.2px;font-size:17.5px;line-height:17.5px;color:#2a2a2a;font-weight:normal;letter-spacing:0.3px;word-spacing:0px;white-space:nowrap;">Код</div>
<div style="position:absolute;left:147.2px;width:300px;text-align:center;top:316.6px;font-size:17px;line-height:17px;color:#dde38e;font-weight:normal;letter-spacing:0.1px;word-spacing:0px;white-space:nowrap;">Харилцагчын нэрс</div>
<div style="position:absolute;left:90.0px;width:300px;text-align:center;top:343.6px;font-size:17px;line-height:17px;color:#dde38e;font-weight:normal;letter-spacing:0.1px;word-spacing:0px;white-space:nowrap;">ДТ</div>
<div style="position:absolute;left:204.0px;width:300px;text-align:center;top:343.6px;font-size:17px;line-height:17px;color:#dde38e;font-weight:normal;letter-spacing:0.1px;word-spacing:0px;white-space:nowrap;">КТ</div>
<div style="position:absolute;left:282.5px;width:300px;text-align:center;top:316.6px;font-size:17px;line-height:17px;color:#dde38e;font-weight:normal;letter-spacing:0.1px;word-spacing:0px;white-space:nowrap;">Сар</div>
<div style="position:absolute;left:361.5px;width:300px;text-align:center;top:316.6px;font-size:17px;line-height:17px;color:#dde38e;font-weight:normal;letter-spacing:0.1px;word-spacing:0px;white-space:nowrap;">Он сар</div>
<div style="position:absolute;left:442.5px;width:300px;text-align:center;top:316.6px;font-size:17px;line-height:17px;color:#dde38e;font-weight:normal;letter-spacing:0.1px;word-spacing:0px;white-space:nowrap;">№</div>
<div style="position:absolute;left:630.0px;width:300px;text-align:center;top:316.6px;font-size:17px;line-height:17px;color:#dde38e;font-weight:normal;letter-spacing:0.1px;word-spacing:0px;white-space:nowrap;">Гүйлгээний утга</div>
<div style="position:absolute;left:817.0px;width:300px;text-align:center;top:316.6px;font-size:17px;line-height:17px;color:#dde38e;font-weight:normal;letter-spacing:0.1px;word-spacing:0px;white-space:nowrap;">НӨТ</div>
<div style="position:absolute;left:937.0px;width:300px;text-align:center;top:316.6px;font-size:17px;line-height:17px;color:#dde38e;font-weight:normal;letter-spacing:0.1px;word-spacing:0px;white-space:nowrap;">Данс</div>
<div style="position:absolute;left:883.0px;width:300px;text-align:center;top:343.6px;font-size:17px;line-height:17px;color:#dde38e;font-weight:normal;letter-spacing:0.1px;word-spacing:0px;white-space:nowrap;">ДТ</div>
<div style="position:absolute;left:981.0px;width:300px;text-align:center;top:343.6px;font-size:17px;line-height:17px;color:#dde38e;font-weight:normal;letter-spacing:0.1px;word-spacing:0px;white-space:nowrap;">КТ</div>
<div style="position:absolute;left:1116.5px;width:300px;text-align:center;top:316.6px;font-size:17px;line-height:17px;color:#dde38e;font-weight:normal;letter-spacing:0.1px;word-spacing:0px;white-space:nowrap;">ДҮН</div>
<div style="position:absolute;left:1282.0px;width:300px;text-align:center;top:316.6px;font-size:17px;line-height:17px;color:#dde38e;font-weight:normal;letter-spacing:0.1px;word-spacing:0px;white-space:nowrap;">DT</div>
<div style="position:absolute;left:1428.5px;width:300px;text-align:center;top:316.6px;font-size:17px;line-height:17px;color:#dde38e;font-weight:normal;letter-spacing:0.1px;word-spacing:0px;white-space:nowrap;">KT</div>
<div style="position:absolute;left:1553.5px;width:300px;text-align:center;top:299.6px;font-size:17px;line-height:17px;color:#dde38e;font-weight:normal;letter-spacing:0.1px;word-spacing:0px;white-space:nowrap;">Үлдэгдэл</div>
<div style="position:absolute;left:1841.0px;width:100px;text-align:center;top:298.6px;font-size:17px;line-height:17px;color:#1f8a2a;font-weight:normal;letter-spacing:0px;word-spacing:0px;white-space:nowrap;">БМЗ</div>
<div style="position:absolute;left:1753.5px;width:120px;text-align:center;top:75.9px;font-size:17.2px;line-height:17.2px;color:#e8de98;font-weight:normal;letter-spacing:-0.25px;word-spacing:0px;white-space:nowrap;">МГТ-ийн</div>
<div style="position:absolute;left:1753.5px;width:120px;text-align:center;top:101.0px;font-size:17.2px;line-height:17.2px;color:#e8de98;font-weight:normal;letter-spacing:-0.25px;word-spacing:0px;white-space:nowrap;">(2.1.5 ба</div>
<div style="position:absolute;left:1753.5px;width:120px;text-align:center;top:126.1px;font-size:17.2px;line-height:17.2px;color:#e8de98;font-weight:normal;letter-spacing:-0.25px;word-spacing:0px;white-space:nowrap;">2.2.5),</div>
<div style="position:absolute;left:1753.5px;width:120px;text-align:center;top:151.2px;font-size:17.2px;line-height:17.2px;color:#e8de98;font-weight:normal;letter-spacing:-0.25px;word-spacing:0px;white-space:nowrap;">(3.1.1 ба</div>
<div style="position:absolute;left:1753.5px;width:120px;text-align:center;top:176.3px;font-size:17.2px;line-height:17.2px;color:#e8de98;font-weight:normal;letter-spacing:-0.25px;word-spacing:0px;white-space:nowrap;">3.2.1)</div>
<div style="position:absolute;left:1753.5px;width:120px;text-align:center;top:201.4px;font-size:17.2px;line-height:17.2px;color:#e8de98;font-weight:normal;letter-spacing:-0.25px;word-spacing:0px;white-space:nowrap;">мөрний</div>
<div style="position:absolute;left:1753.5px;width:120px;text-align:center;top:226.5px;font-size:17.2px;line-height:17.2px;color:#e8de98;font-weight:normal;letter-spacing:-0.25px;word-spacing:0px;white-space:nowrap;">үзүүлэл</div>
<div style="position:absolute;left:1753.5px;width:120px;text-align:center;top:251.6px;font-size:17.2px;line-height:17.2px;color:#e8de98;font-weight:normal;letter-spacing:-0.25px;word-spacing:0px;white-space:nowrap;">тийг</div>
<div style="position:absolute;left:1753.5px;width:120px;text-align:center;top:276.7px;font-size:17.2px;line-height:17.2px;color:#e8de98;font-weight:normal;letter-spacing:-0.25px;word-spacing:0px;white-space:nowrap;">тохир</div>
<div style="position:absolute;left:1753.5px;width:120px;text-align:center;top:301.8px;font-size:17.2px;line-height:17.2px;color:#e8de98;font-weight:normal;letter-spacing:-0.25px;word-spacing:0px;white-space:nowrap;">уулах</div>
<div style="position:absolute;left:1877.0px;top:196.2px;font-size:17.5px;line-height:17.5px;color:#e8de98;font-weight:normal;letter-spacing:0.3px;word-spacing:0px;white-space:nowrap;">Зард</div>
<div style="position:absolute;left:705.0px;width:400px;text-align:center;top:368.2px;font-size:17.5px;line-height:17.5px;color:#333333;font-weight:normal;letter-spacing:0.5px;word-spacing:0px;white-space:nowrap;">Энд гүйлгээ оруулахгүй</div>
<div style="position:absolute;left:0;top:0;width:1920px;height:1032px;overflow:hidden;">
<div style="position:absolute;left:89.0px;width:94px;text-align:center;top:393.3px;font-size:17.2px;line-height:17.2px;color:#2e2e2e;font-weight:normal;letter-spacing:0px;word-spacing:0px;white-space:nowrap;">Шүүлт</div>
<div style="position:absolute;left:412.5px;width:40px;text-align:center;top:393.3px;font-size:17.2px;line-height:17.2px;color:#333333;font-weight:normal;letter-spacing:0px;word-spacing:0px;white-space:nowrap;">1</div>
<div style="position:absolute;left:444.5px;width:120px;text-align:right;top:393.4px;font-size:17.2px;line-height:17.2px;color:#333333;font-weight:normal;letter-spacing:0.25px;word-spacing:0px;white-space:nowrap;">1/2/2019</div>
<div style="position:absolute;left:620.0px;top:393.4px;font-size:17.2px;line-height:17.2px;color:#333333;font-weight:normal;letter-spacing:0px;word-spacing:3px;white-space:nowrap;">Мэндүүл сургалтын төлбөр</div>
<div style="position:absolute;left:994.0px;top:393.4px;font-size:17.2px;line-height:17.2px;color:#333333;font-weight:normal;letter-spacing:0.1px;word-spacing:0px;white-space:nowrap;">Хаан</div>
<div style="position:absolute;left:1082.0px;top:393.4px;font-size:17.2px;line-height:17.2px;color:#333333;font-weight:normal;letter-spacing:0.1px;word-spacing:0px;white-space:nowrap;">Борлуулалт</div>
<div style="position:absolute;left:1186.5px;width:160px;text-align:center;top:393.4px;font-size:17.2px;line-height:17.2px;color:#333333;font-weight:normal;letter-spacing:0.55px;word-spacing:0px;white-space:nowrap;">300,000</div>
<div style="position:absolute;left:89.0px;width:94px;text-align:center;top:418.5px;font-size:17.2px;line-height:17.2px;color:#2e2e2e;font-weight:normal;letter-spacing:0px;word-spacing:0px;white-space:nowrap;">Шүүлт</div>
<div style="position:absolute;left:412.5px;width:40px;text-align:center;top:418.5px;font-size:17.2px;line-height:17.2px;color:#333333;font-weight:normal;letter-spacing:0px;word-spacing:0px;white-space:nowrap;">1</div>
<div style="position:absolute;left:444.5px;width:120px;text-align:right;top:418.6px;font-size:17.2px;line-height:17.2px;color:#333333;font-weight:normal;letter-spacing:0.25px;word-spacing:0px;white-space:nowrap;">1/3/2019</div>
<div style="position:absolute;left:620.0px;top:418.6px;font-size:17.2px;line-height:17.2px;color:#333333;font-weight:normal;letter-spacing:0px;word-spacing:3px;white-space:nowrap;">Бари-Өрнөх /сургалтын төлбөр /</div>
<div style="position:absolute;left:994.0px;top:418.6px;font-size:17.2px;line-height:17.2px;color:#333333;font-weight:normal;letter-spacing:0.1px;word-spacing:0px;white-space:nowrap;">Хаан</div>
<div style="position:absolute;left:1082.0px;top:418.6px;font-size:17.2px;line-height:17.2px;color:#333333;font-weight:normal;letter-spacing:0.1px;word-spacing:0px;white-space:nowrap;">Борлуулалт</div>
<div style="position:absolute;left:1186.5px;width:160px;text-align:center;top:418.6px;font-size:17.2px;line-height:17.2px;color:#333333;font-weight:normal;letter-spacing:0.55px;word-spacing:0px;white-space:nowrap;">280,000</div>
<div style="position:absolute;left:89.0px;width:94px;text-align:center;top:443.6px;font-size:17.2px;line-height:17.2px;color:#2e2e2e;font-weight:normal;letter-spacing:0px;word-spacing:0px;white-space:nowrap;">Шүүлт</div>
<div style="position:absolute;left:412.5px;width:40px;text-align:center;top:443.6px;font-size:17.2px;line-height:17.2px;color:#333333;font-weight:normal;letter-spacing:0px;word-spacing:0px;white-space:nowrap;">1</div>
<div style="position:absolute;left:444.5px;width:120px;text-align:right;top:443.7px;font-size:17.2px;line-height:17.2px;color:#333333;font-weight:normal;letter-spacing:0.25px;word-spacing:0px;white-space:nowrap;">1/4/2019</div>
<div style="position:absolute;left:620.0px;top:443.7px;font-size:17.2px;line-height:17.2px;color:#333333;font-weight:normal;letter-spacing:0px;word-spacing:3px;white-space:nowrap;">Есүй /Сургалтын төлбөр /</div>
<div style="position:absolute;left:994.0px;top:443.7px;font-size:17.2px;line-height:17.2px;color:#333333;font-weight:normal;letter-spacing:0.1px;word-spacing:0px;white-space:nowrap;">Хаан</div>
<div style="position:absolute;left:1082.0px;top:443.7px;font-size:17.2px;line-height:17.2px;color:#333333;font-weight:normal;letter-spacing:0.1px;word-spacing:0px;white-space:nowrap;">Борлуулалт</div>
<div style="position:absolute;left:1186.5px;width:160px;text-align:center;top:443.7px;font-size:17.2px;line-height:17.2px;color:#333333;font-weight:normal;letter-spacing:0.55px;word-spacing:0px;white-space:nowrap;">190,000</div>
<div style="position:absolute;left:89.0px;width:94px;text-align:center;top:468.7px;font-size:17.2px;line-height:17.2px;color:#2e2e2e;font-weight:normal;letter-spacing:0px;word-spacing:0px;white-space:nowrap;">Шүүлт</div>
<div style="position:absolute;left:412.5px;width:40px;text-align:center;top:468.7px;font-size:17.2px;line-height:17.2px;color:#333333;font-weight:normal;letter-spacing:0px;word-spacing:0px;white-space:nowrap;">1</div>
<div style="position:absolute;left:444.5px;width:120px;text-align:right;top:468.8px;font-size:17.2px;line-height:17.2px;color:#333333;font-weight:normal;letter-spacing:0.25px;word-spacing:0px;white-space:nowrap;">1/4/2019</div>
<div style="position:absolute;left:620.0px;top:468.8px;font-size:17.2px;line-height:17.2px;color:#333333;font-weight:normal;letter-spacing:0px;word-spacing:3px;white-space:nowrap;">Хангай /Сургалтын төлбөр /</div>
<div style="position:absolute;left:994.0px;top:468.8px;font-size:17.2px;line-height:17.2px;color:#333333;font-weight:normal;letter-spacing:0.1px;word-spacing:0px;white-space:nowrap;">Хаан</div>
<div style="position:absolute;left:1082.0px;top:468.8px;font-size:17.2px;line-height:17.2px;color:#333333;font-weight:normal;letter-spacing:0.1px;word-spacing:0px;white-space:nowrap;">Борлуулалт</div>
<div style="position:absolute;left:1186.5px;width:160px;text-align:center;top:468.8px;font-size:17.2px;line-height:17.2px;color:#333333;font-weight:normal;letter-spacing:0.55px;word-spacing:0px;white-space:nowrap;">280,000</div>
<div style="position:absolute;left:89.0px;width:94px;text-align:center;top:493.9px;font-size:17.2px;line-height:17.2px;color:#2e2e2e;font-weight:normal;letter-spacing:0px;word-spacing:0px;white-space:nowrap;">Шүүлт</div>
<div style="position:absolute;left:412.5px;width:40px;text-align:center;top:493.9px;font-size:17.2px;line-height:17.2px;color:#333333;font-weight:normal;letter-spacing:0px;word-spacing:0px;white-space:nowrap;">1</div>
<div style="position:absolute;left:444.5px;width:120px;text-align:right;top:493.9px;font-size:17.2px;line-height:17.2px;color:#333333;font-weight:normal;letter-spacing:0.25px;word-spacing:0px;white-space:nowrap;">1/7/2019</div>
<div style="position:absolute;left:620.0px;top:493.9px;font-size:17.2px;line-height:17.2px;color:#333333;font-weight:normal;letter-spacing:0px;word-spacing:3px;white-space:nowrap;">Жаргалсайхан /Сургалтын төлбөр /</div>
<div style="position:absolute;left:994.0px;top:493.9px;font-size:17.2px;line-height:17.2px;color:#333333;font-weight:normal;letter-spacing:0.1px;word-spacing:0px;white-space:nowrap;">Хаан</div>
<div style="position:absolute;left:1082.0px;top:493.9px;font-size:17.2px;line-height:17.2px;color:#333333;font-weight:normal;letter-spacing:0.1px;word-spacing:0px;white-space:nowrap;">Борлуулалт</div>
<div style="position:absolute;left:1186.5px;width:160px;text-align:center;top:493.9px;font-size:17.2px;line-height:17.2px;color:#333333;font-weight:normal;letter-spacing:0.55px;word-spacing:0px;white-space:nowrap;">130,000</div>
<div style="position:absolute;left:89.0px;width:94px;text-align:center;top:519.0px;font-size:17.2px;line-height:17.2px;color:#2e2e2e;font-weight:normal;letter-spacing:0px;word-spacing:0px;white-space:nowrap;">Шүүлт</div>
<div style="position:absolute;left:412.5px;width:40px;text-align:center;top:519.0px;font-size:17.2px;line-height:17.2px;color:#333333;font-weight:normal;letter-spacing:0px;word-spacing:0px;white-space:nowrap;">1</div>
<div style="position:absolute;left:444.5px;width:120px;text-align:right;top:519.0px;font-size:17.2px;line-height:17.2px;color:#333333;font-weight:normal;letter-spacing:0.25px;word-spacing:0px;white-space:nowrap;">1/7/2019</div>
<div style="position:absolute;left:620.0px;top:519.0px;font-size:17.2px;line-height:17.2px;color:#333333;font-weight:normal;letter-spacing:0px;word-spacing:3px;white-space:nowrap;">ЗАРЛАГА</div>
<div style="position:absolute;left:994.0px;top:519.0px;font-size:17.2px;line-height:17.2px;color:#333333;font-weight:normal;letter-spacing:0.1px;word-spacing:0px;white-space:nowrap;">касст</div>
<div style="position:absolute;left:1082.0px;top:519.0px;font-size:17.2px;line-height:17.2px;color:#333333;font-weight:normal;letter-spacing:0.1px;word-spacing:0px;white-space:nowrap;">Хаан</div>
<div style="position:absolute;left:1186.5px;width:160px;text-align:center;top:519.0px;font-size:17.2px;line-height:17.2px;color:#333333;font-weight:normal;letter-spacing:0.55px;word-spacing:0px;white-space:nowrap;">800,000</div>
<div style="position:absolute;left:89.0px;width:94px;text-align:center;top:544.1px;font-size:17.2px;line-height:17.2px;color:#2e2e2e;font-weight:normal;letter-spacing:0px;word-spacing:0px;white-space:nowrap;">Шүүлт</div>
<div style="position:absolute;left:412.5px;width:40px;text-align:center;top:544.1px;font-size:17.2px;line-height:17.2px;color:#333333;font-weight:normal;letter-spacing:0px;word-spacing:0px;white-space:nowrap;">1</div>
<div style="position:absolute;left:444.5px;width:120px;text-align:right;top:544.2px;font-size:17.2px;line-height:17.2px;color:#333333;font-weight:normal;letter-spacing:0.25px;word-spacing:0px;white-space:nowrap;">1/7/2019</div>
<div style="position:absolute;left:620.0px;top:544.2px;font-size:17.2px;line-height:17.2px;color:#333333;font-weight:normal;letter-spacing:0px;word-spacing:3px;white-space:nowrap;">Зарлагын гүйлгээний хураамж</div>
<div style="position:absolute;left:994.0px;top:544.2px;font-size:17.2px;line-height:17.2px;color:#333333;font-weight:normal;letter-spacing:0.1px;word-spacing:0px;white-space:nowrap;">Шимтгэл</div>
<div style="position:absolute;left:1082.0px;top:544.2px;font-size:17.2px;line-height:17.2px;color:#333333;font-weight:normal;letter-spacing:0.1px;word-spacing:0px;white-space:nowrap;">Хаан</div>
<div style="position:absolute;left:1186.5px;width:160px;text-align:center;top:544.2px;font-size:17.2px;line-height:17.2px;color:#333333;font-weight:normal;letter-spacing:0.55px;word-spacing:0px;white-space:nowrap;">300</div>
<div style="position:absolute;left:89.0px;width:94px;text-align:center;top:569.2px;font-size:17.2px;line-height:17.2px;color:#2e2e2e;font-weight:normal;letter-spacing:0px;word-spacing:0px;white-space:nowrap;">Шүүлт</div>
<div style="position:absolute;left:412.5px;width:40px;text-align:center;top:569.2px;font-size:17.2px;line-height:17.2px;color:#333333;font-weight:normal;letter-spacing:0px;word-spacing:0px;white-space:nowrap;">1</div>
<div style="position:absolute;left:444.5px;width:120px;text-align:right;top:569.3px;font-size:17.2px;line-height:17.2px;color:#333333;font-weight:normal;letter-spacing:0.25px;word-spacing:0px;white-space:nowrap;">1/9/2019</div>
<div style="position:absolute;left:620.0px;top:569.3px;font-size:17.2px;line-height:17.2px;color:#333333;font-weight:normal;letter-spacing:0px;word-spacing:3px;white-space:nowrap;">Эмү-Үжин /Сургалтын төлбөр /</div>
<div style="position:absolute;left:994.0px;top:569.3px;font-size:17.2px;line-height:17.2px;color:#333333;font-weight:normal;letter-spacing:0.1px;word-spacing:0px;white-space:nowrap;">Хаан</div>
<div style="position:absolute;left:1082.0px;top:569.3px;font-size:17.2px;line-height:17.2px;color:#333333;font-weight:normal;letter-spacing:0.1px;word-spacing:0px;white-space:nowrap;">Борлуулалт</div>
<div style="position:absolute;left:1186.5px;width:160px;text-align:center;top:569.3px;font-size:17.2px;line-height:17.2px;color:#333333;font-weight:normal;letter-spacing:0.55px;word-spacing:0px;white-space:nowrap;">280,000</div>
<div style="position:absolute;left:89.0px;width:94px;text-align:center;top:594.3px;font-size:17.2px;line-height:17.2px;color:#2e2e2e;font-weight:normal;letter-spacing:0px;word-spacing:0px;white-space:nowrap;">Шүүлт</div>
<div style="position:absolute;left:412.5px;width:40px;text-align:center;top:594.3px;font-size:17.2px;line-height:17.2px;color:#333333;font-weight:normal;letter-spacing:0px;word-spacing:0px;white-space:nowrap;">1</div>
<div style="position:absolute;left:444.5px;width:120px;text-align:right;top:594.4px;font-size:17.2px;line-height:17.2px;color:#333333;font-weight:normal;letter-spacing:0.25px;word-spacing:0px;white-space:nowrap;">1/11/2019</div>
<div style="position:absolute;left:620.0px;top:594.4px;font-size:17.2px;line-height:17.2px;color:#333333;font-weight:normal;letter-spacing:0px;word-spacing:3px;white-space:nowrap;">Өсөх-Ирээдүй /Сургалтын төлбөр /</div>
<div style="position:absolute;left:994.0px;top:594.4px;font-size:17.2px;line-height:17.2px;color:#333333;font-weight:normal;letter-spacing:0.1px;word-spacing:0px;white-space:nowrap;">Хаан</div>
<div style="position:absolute;left:1082.0px;top:594.4px;font-size:17.2px;line-height:17.2px;color:#333333;font-weight:normal;letter-spacing:0.1px;word-spacing:0px;white-space:nowrap;">Борлуулалт</div>
<div style="position:absolute;left:1186.5px;width:160px;text-align:center;top:594.4px;font-size:17.2px;line-height:17.2px;color:#333333;font-weight:normal;letter-spacing:0.55px;word-spacing:0px;white-space:nowrap;">280,000</div>
<div style="position:absolute;left:89.0px;width:94px;text-align:center;top:619.5px;font-size:17.2px;line-height:17.2px;color:#2e2e2e;font-weight:normal;letter-spacing:0px;word-spacing:0px;white-space:nowrap;">Шүүлт</div>
<div style="position:absolute;left:412.5px;width:40px;text-align:center;top:619.5px;font-size:17.2px;line-height:17.2px;color:#333333;font-weight:normal;letter-spacing:0px;word-spacing:0px;white-space:nowrap;">1</div>
<div style="position:absolute;left:444.5px;width:120px;text-align:right;top:619.5px;font-size:17.2px;line-height:17.2px;color:#333333;font-weight:normal;letter-spacing:0.25px;word-spacing:0px;white-space:nowrap;">1/13/2019</div>
<div style="position:absolute;left:620.0px;top:619.5px;font-size:17.2px;line-height:17.2px;color:#333333;font-weight:normal;letter-spacing:0px;word-spacing:3px;white-space:nowrap;">Номин /Сургалтын төлбөр /</div>
<div style="position:absolute;left:994.0px;top:619.5px;font-size:17.2px;line-height:17.2px;color:#333333;font-weight:normal;letter-spacing:0.1px;word-spacing:0px;white-space:nowrap;">Хаан</div>
<div style="position:absolute;left:1082.0px;top:619.5px;font-size:17.2px;line-height:17.2px;color:#333333;font-weight:normal;letter-spacing:0.1px;word-spacing:0px;white-space:nowrap;">Борлуулалт</div>
<div style="position:absolute;left:1186.5px;width:160px;text-align:center;top:619.5px;font-size:17.2px;line-height:17.2px;color:#333333;font-weight:normal;letter-spacing:0.55px;word-spacing:0px;white-space:nowrap;">195,000</div>
<div style="position:absolute;left:89.0px;width:94px;text-align:center;top:644.6px;font-size:17.2px;line-height:17.2px;color:#2e2e2e;font-weight:normal;letter-spacing:0px;word-spacing:0px;white-space:nowrap;">Шүүлт</div>
<div style="position:absolute;left:412.5px;width:40px;text-align:center;top:644.6px;font-size:17.2px;line-height:17.2px;color:#333333;font-weight:normal;letter-spacing:0px;word-spacing:0px;white-space:nowrap;">1</div>
<div style="position:absolute;left:444.5px;width:120px;text-align:right;top:644.6px;font-size:17.2px;line-height:17.2px;color:#333333;font-weight:normal;letter-spacing:0.25px;word-spacing:0px;white-space:nowrap;">1/14/2019</div>
<div style="position:absolute;left:620.0px;top:644.6px;font-size:17.2px;line-height:17.2px;color:#333333;font-weight:normal;letter-spacing:0px;word-spacing:3px;white-space:nowrap;">ЗАРЛАГА</div>
<div style="position:absolute;left:994.0px;top:644.6px;font-size:17.2px;line-height:17.2px;color:#333333;font-weight:normal;letter-spacing:0.1px;word-spacing:0px;white-space:nowrap;">касст</div>
<div style="position:absolute;left:1082.0px;top:644.6px;font-size:17.2px;line-height:17.2px;color:#333333;font-weight:normal;letter-spacing:0.1px;word-spacing:0px;white-space:nowrap;">Хаан</div>
<div style="position:absolute;left:1186.5px;width:160px;text-align:center;top:644.6px;font-size:17.2px;line-height:17.2px;color:#333333;font-weight:normal;letter-spacing:0.55px;word-spacing:0px;white-space:nowrap;">1,500,000</div>
<div style="position:absolute;left:89.0px;width:94px;text-align:center;top:669.7px;font-size:17.2px;line-height:17.2px;color:#2e2e2e;font-weight:normal;letter-spacing:0px;word-spacing:0px;white-space:nowrap;">Шүүлт</div>
<div style="position:absolute;left:412.5px;width:40px;text-align:center;top:669.7px;font-size:17.2px;line-height:17.2px;color:#333333;font-weight:normal;letter-spacing:0px;word-spacing:0px;white-space:nowrap;">1</div>
<div style="position:absolute;left:444.5px;width:120px;text-align:right;top:669.8px;font-size:17.2px;line-height:17.2px;color:#333333;font-weight:normal;letter-spacing:0.25px;word-spacing:0px;white-space:nowrap;">1/14/2019</div>
<div style="position:absolute;left:620.0px;top:669.8px;font-size:17.2px;line-height:17.2px;color:#333333;font-weight:normal;letter-spacing:0px;word-spacing:3px;white-space:nowrap;">Зарлагын гүйлгээний хураамж</div>
<div style="position:absolute;left:994.0px;top:669.8px;font-size:17.2px;line-height:17.2px;color:#333333;font-weight:normal;letter-spacing:0.1px;word-spacing:0px;white-space:nowrap;">Шимтгэл</div>
<div style="position:absolute;left:1082.0px;top:669.8px;font-size:17.2px;line-height:17.2px;color:#333333;font-weight:normal;letter-spacing:0.1px;word-spacing:0px;white-space:nowrap;">Хаан</div>
<div style="position:absolute;left:1186.5px;width:160px;text-align:center;top:669.8px;font-size:17.2px;line-height:17.2px;color:#333333;font-weight:normal;letter-spacing:0.55px;word-spacing:0px;white-space:nowrap;">300</div>
<div style="position:absolute;left:89.0px;width:94px;text-align:center;top:694.8px;font-size:17.2px;line-height:17.2px;color:#2e2e2e;font-weight:normal;letter-spacing:0px;word-spacing:0px;white-space:nowrap;">Шүүлт</div>
<div style="position:absolute;left:412.5px;width:40px;text-align:center;top:694.8px;font-size:17.2px;line-height:17.2px;color:#333333;font-weight:normal;letter-spacing:0px;word-spacing:0px;white-space:nowrap;">1</div>
<div style="position:absolute;left:444.5px;width:120px;text-align:right;top:694.9px;font-size:17.2px;line-height:17.2px;color:#333333;font-weight:normal;letter-spacing:0.25px;word-spacing:0px;white-space:nowrap;">1/14/2019</div>
<div style="position:absolute;left:620.0px;top:694.9px;font-size:17.2px;line-height:17.2px;color:#333333;font-weight:normal;letter-spacing:0px;word-spacing:3px;white-space:nowrap;">Жаргалсайхан /Сургалтын төлбөр /</div>
<div style="position:absolute;left:994.0px;top:694.9px;font-size:17.2px;line-height:17.2px;color:#333333;font-weight:normal;letter-spacing:0.1px;word-spacing:0px;white-space:nowrap;">Хаан</div>
<div style="position:absolute;left:1082.0px;top:694.9px;font-size:17.2px;line-height:17.2px;color:#333333;font-weight:normal;letter-spacing:0.1px;word-spacing:0px;white-space:nowrap;">Борлуулалт</div>
<div style="position:absolute;left:1186.5px;width:160px;text-align:center;top:694.9px;font-size:17.2px;line-height:17.2px;color:#333333;font-weight:normal;letter-spacing:0.55px;word-spacing:0px;white-space:nowrap;">150,000</div>
<div style="position:absolute;left:89.0px;width:94px;text-align:center;top:719.9px;font-size:17.2px;line-height:17.2px;color:#2e2e2e;font-weight:normal;letter-spacing:0px;word-spacing:0px;white-space:nowrap;">Шүүлт</div>
<div style="position:absolute;left:412.5px;width:40px;text-align:center;top:719.9px;font-size:17.2px;line-height:17.2px;color:#333333;font-weight:normal;letter-spacing:0px;word-spacing:0px;white-space:nowrap;">1</div>
<div style="position:absolute;left:444.5px;width:120px;text-align:right;top:720.0px;font-size:17.2px;line-height:17.2px;color:#333333;font-weight:normal;letter-spacing:0.25px;word-spacing:0px;white-space:nowrap;">1/14/2019</div>
<div style="position:absolute;left:620.0px;top:720.0px;font-size:17.2px;line-height:17.2px;color:#333333;font-weight:normal;letter-spacing:0px;word-spacing:3px;white-space:nowrap;">Сургалтын төлбөр</div>
<div style="position:absolute;left:994.0px;top:720.0px;font-size:17.2px;line-height:17.2px;color:#333333;font-weight:normal;letter-spacing:0.1px;word-spacing:0px;white-space:nowrap;">Хаан</div>
<div style="position:absolute;left:1082.0px;top:720.0px;font-size:17.2px;line-height:17.2px;color:#333333;font-weight:normal;letter-spacing:0.1px;word-spacing:0px;white-space:nowrap;">Борлуулалт</div>
<div style="position:absolute;left:1186.5px;width:160px;text-align:center;top:720.0px;font-size:17.2px;line-height:17.2px;color:#333333;font-weight:normal;letter-spacing:0.55px;word-spacing:0px;white-space:nowrap;">570,000</div>
<div style="position:absolute;left:89.0px;width:94px;text-align:center;top:745.1px;font-size:17.2px;line-height:17.2px;color:#2e2e2e;font-weight:normal;letter-spacing:0px;word-spacing:0px;white-space:nowrap;">Шүүлт</div>
<div style="position:absolute;left:412.5px;width:40px;text-align:center;top:745.1px;font-size:17.2px;line-height:17.2px;color:#333333;font-weight:normal;letter-spacing:0px;word-spacing:0px;white-space:nowrap;">1</div>
<div style="position:absolute;left:444.5px;width:120px;text-align:right;top:745.1px;font-size:17.2px;line-height:17.2px;color:#333333;font-weight:normal;letter-spacing:0.25px;word-spacing:0px;white-space:nowrap;">1/14/2019</div>
<div style="position:absolute;left:620.0px;top:745.1px;font-size:17.2px;line-height:17.2px;color:#333333;font-weight:normal;letter-spacing:0px;word-spacing:3px;white-space:nowrap;">Ханбилгүүн /5өдрийн төлбөр /</div>
<div style="position:absolute;left:994.0px;top:745.1px;font-size:17.2px;line-height:17.2px;color:#333333;font-weight:normal;letter-spacing:0.1px;word-spacing:0px;white-space:nowrap;">Хаан</div>
<div style="position:absolute;left:1082.0px;top:745.1px;font-size:17.2px;line-height:17.2px;color:#333333;font-weight:normal;letter-spacing:0.1px;word-spacing:0px;white-space:nowrap;">Борлуулалт</div>
<div style="position:absolute;left:1186.5px;width:160px;text-align:center;top:745.1px;font-size:17.2px;line-height:17.2px;color:#333333;font-weight:normal;letter-spacing:0.55px;word-spacing:0px;white-space:nowrap;">90,000</div>
<div style="position:absolute;left:89.0px;width:94px;text-align:center;top:770.2px;font-size:17.2px;line-height:17.2px;color:#2e2e2e;font-weight:normal;letter-spacing:0px;word-spacing:0px;white-space:nowrap;">Шүүлт</div>
<div style="position:absolute;left:412.5px;width:40px;text-align:center;top:770.2px;font-size:17.2px;line-height:17.2px;color:#333333;font-weight:normal;letter-spacing:0px;word-spacing:0px;white-space:nowrap;">1</div>
<div style="position:absolute;left:444.5px;width:120px;text-align:right;top:770.2px;font-size:17.2px;line-height:17.2px;color:#333333;font-weight:normal;letter-spacing:0.25px;word-spacing:0px;white-space:nowrap;">1/14/2019</div>
<div style="position:absolute;left:620.0px;top:770.2px;font-size:17.2px;line-height:17.2px;color:#333333;font-weight:normal;letter-spacing:0px;word-spacing:3px;white-space:nowrap;">Мичидмаа /Сургалтын төлбөр /</div>
<div style="position:absolute;left:994.0px;top:770.2px;font-size:17.2px;line-height:17.2px;color:#333333;font-weight:normal;letter-spacing:0.1px;word-spacing:0px;white-space:nowrap;">Хаан</div>
<div style="position:absolute;left:1082.0px;top:770.2px;font-size:17.2px;line-height:17.2px;color:#333333;font-weight:normal;letter-spacing:0.1px;word-spacing:0px;white-space:nowrap;">Борлуулалт</div>
<div style="position:absolute;left:1186.5px;width:160px;text-align:center;top:770.2px;font-size:17.2px;line-height:17.2px;color:#333333;font-weight:normal;letter-spacing:0.55px;word-spacing:0px;white-space:nowrap;">150,000</div>
<div style="position:absolute;left:89.0px;width:94px;text-align:center;top:795.3px;font-size:17.2px;line-height:17.2px;color:#2e2e2e;font-weight:normal;letter-spacing:0px;word-spacing:0px;white-space:nowrap;">Шүүлт</div>
<div style="position:absolute;left:412.5px;width:40px;text-align:center;top:795.3px;font-size:17.2px;line-height:17.2px;color:#333333;font-weight:normal;letter-spacing:0px;word-spacing:0px;white-space:nowrap;">1</div>
<div style="position:absolute;left:444.5px;width:120px;text-align:right;top:795.4px;font-size:17.2px;line-height:17.2px;color:#333333;font-weight:normal;letter-spacing:0.25px;word-spacing:0px;white-space:nowrap;">1/14/2019</div>
<div style="position:absolute;left:620.0px;top:795.4px;font-size:17.2px;line-height:17.2px;color:#333333;font-weight:normal;letter-spacing:0px;word-spacing:3px;white-space:nowrap;">Цэцэнбилэг /Сургалтын төлбөр /</div>
<div style="position:absolute;left:994.0px;top:795.4px;font-size:17.2px;line-height:17.2px;color:#333333;font-weight:normal;letter-spacing:0.1px;word-spacing:0px;white-space:nowrap;">Хаан</div>
<div style="position:absolute;left:1082.0px;top:795.4px;font-size:17.2px;line-height:17.2px;color:#333333;font-weight:normal;letter-spacing:0.1px;word-spacing:0px;white-space:nowrap;">Борлуулалт</div>
<div style="position:absolute;left:1186.5px;width:160px;text-align:center;top:795.4px;font-size:17.2px;line-height:17.2px;color:#333333;font-weight:normal;letter-spacing:0.55px;word-spacing:0px;white-space:nowrap;">200,000</div>
<div style="position:absolute;left:89.0px;width:94px;text-align:center;top:820.4px;font-size:17.2px;line-height:17.2px;color:#2e2e2e;font-weight:normal;letter-spacing:0px;word-spacing:0px;white-space:nowrap;">Шүүлт</div>
<div style="position:absolute;left:412.5px;width:40px;text-align:center;top:820.4px;font-size:17.2px;line-height:17.2px;color:#333333;font-weight:normal;letter-spacing:0px;word-spacing:0px;white-space:nowrap;">1</div>
<div style="position:absolute;left:444.5px;width:120px;text-align:right;top:820.5px;font-size:17.2px;line-height:17.2px;color:#333333;font-weight:normal;letter-spacing:0.25px;word-spacing:0px;white-space:nowrap;">1/15/2019</div>
<div style="position:absolute;left:620.0px;top:820.5px;font-size:17.2px;line-height:17.2px;color:#333333;font-weight:normal;letter-spacing:0px;word-spacing:3px;white-space:nowrap;">Оюундарь /Сургалтын төлбөр /</div>
<div style="position:absolute;left:994.0px;top:820.5px;font-size:17.2px;line-height:17.2px;color:#333333;font-weight:normal;letter-spacing:0.1px;word-spacing:0px;white-space:nowrap;">Хаан</div>
<div style="position:absolute;left:1082.0px;top:820.5px;font-size:17.2px;line-height:17.2px;color:#333333;font-weight:normal;letter-spacing:0.1px;word-spacing:0px;white-space:nowrap;">Борлуулалт</div>
<div style="position:absolute;left:1186.5px;width:160px;text-align:center;top:820.5px;font-size:17.2px;line-height:17.2px;color:#333333;font-weight:normal;letter-spacing:0.55px;word-spacing:0px;white-space:nowrap;">300,000</div>
<div style="position:absolute;left:89.0px;width:94px;text-align:center;top:857.6px;font-size:17.2px;line-height:17.2px;color:#2e2e2e;font-weight:normal;letter-spacing:0px;word-spacing:0px;white-space:nowrap;">Шүүлт</div>
<div style="position:absolute;left:412.5px;width:40px;text-align:center;top:857.6px;font-size:17.2px;line-height:17.2px;color:#333333;font-weight:normal;letter-spacing:0px;word-spacing:0px;white-space:nowrap;">1</div>
<div style="position:absolute;left:444.5px;width:120px;text-align:right;top:869.6px;font-size:17.2px;line-height:17.2px;color:#333333;font-weight:normal;letter-spacing:0.25px;word-spacing:0px;white-space:nowrap;">1/15/2019</div>
<div style="position:absolute;left:620.0px;top:845.0px;font-size:17.2px;line-height:17.2px;color:#333333;font-weight:normal;letter-spacing:0px;word-spacing:3px;white-space:nowrap;">Гандара Анжиушири/Сургалтын</div>
<div style="position:absolute;left:620.0px;top:869.6px;font-size:17.2px;line-height:17.2px;color:#333333;font-weight:normal;letter-spacing:0px;word-spacing:3px;white-space:nowrap;">төлбөр /</div>
<div style="position:absolute;left:994.0px;top:869.6px;font-size:17.2px;line-height:17.2px;color:#333333;font-weight:normal;letter-spacing:0.1px;word-spacing:0px;white-space:nowrap;">Хаан</div>
<div style="position:absolute;left:1082.0px;top:869.6px;font-size:17.2px;line-height:17.2px;color:#333333;font-weight:normal;letter-spacing:0.1px;word-spacing:0px;white-space:nowrap;">Борлуулалт</div>
<div style="position:absolute;left:1186.5px;width:160px;text-align:center;top:869.6px;font-size:17.2px;line-height:17.2px;color:#333333;font-weight:normal;letter-spacing:0.55px;word-spacing:0px;white-space:nowrap;">570,000</div>
<div style="position:absolute;left:89.0px;width:94px;text-align:center;top:894.5px;font-size:17.2px;line-height:17.2px;color:#2e2e2e;font-weight:normal;letter-spacing:0px;word-spacing:0px;white-space:nowrap;">Шүүлт</div>
<div style="position:absolute;left:412.5px;width:40px;text-align:center;top:894.5px;font-size:17.2px;line-height:17.2px;color:#333333;font-weight:normal;letter-spacing:0px;word-spacing:0px;white-space:nowrap;">1</div>
<div style="position:absolute;left:444.5px;width:120px;text-align:right;top:894.4px;font-size:17.2px;line-height:17.2px;color:#333333;font-weight:normal;letter-spacing:0.25px;word-spacing:0px;white-space:nowrap;">1/15/2019</div>
<div style="position:absolute;left:620.0px;top:894.4px;font-size:17.2px;line-height:17.2px;color:#333333;font-weight:normal;letter-spacing:0px;word-spacing:3px;white-space:nowrap;">Вернико/Сургалтын&nbsp; төлбөр/</div>
<div style="position:absolute;left:994.0px;top:894.4px;font-size:17.2px;line-height:17.2px;color:#333333;font-weight:normal;letter-spacing:0.1px;word-spacing:0px;white-space:nowrap;">Хаан</div>
<div style="position:absolute;left:1082.0px;top:894.4px;font-size:17.2px;line-height:17.2px;color:#333333;font-weight:normal;letter-spacing:0.1px;word-spacing:0px;white-space:nowrap;">Борлуулалт</div>
<div style="position:absolute;left:1186.5px;width:160px;text-align:center;top:894.4px;font-size:17.2px;line-height:17.2px;color:#333333;font-weight:normal;letter-spacing:0.55px;word-spacing:0px;white-space:nowrap;">130,000</div>
<div style="position:absolute;left:89.0px;width:94px;text-align:center;top:919.4px;font-size:17.2px;line-height:17.2px;color:#2e2e2e;font-weight:normal;letter-spacing:0px;word-spacing:0px;white-space:nowrap;">Шүүлт</div>
<div style="position:absolute;left:412.5px;width:40px;text-align:center;top:919.4px;font-size:17.2px;line-height:17.2px;color:#333333;font-weight:normal;letter-spacing:0px;word-spacing:0px;white-space:nowrap;">1</div>
<div style="position:absolute;left:444.5px;width:120px;text-align:right;top:919.4px;font-size:17.2px;line-height:17.2px;color:#333333;font-weight:normal;letter-spacing:0.25px;word-spacing:0px;white-space:nowrap;">1/15/2019</div>
<div style="position:absolute;left:620.0px;top:919.4px;font-size:17.2px;line-height:17.2px;color:#333333;font-weight:normal;letter-spacing:0px;word-spacing:3px;white-space:nowrap;">ЗАРЛАГА</div>
<div style="position:absolute;left:994.0px;top:919.4px;font-size:17.2px;line-height:17.2px;color:#333333;font-weight:normal;letter-spacing:0.1px;word-spacing:0px;white-space:nowrap;">касст</div>
<div style="position:absolute;left:1082.0px;top:919.4px;font-size:17.2px;line-height:17.2px;color:#333333;font-weight:normal;letter-spacing:0.1px;word-spacing:0px;white-space:nowrap;">Хаан</div>
<div style="position:absolute;left:1186.5px;width:160px;text-align:center;top:919.4px;font-size:17.2px;line-height:17.2px;color:#333333;font-weight:normal;letter-spacing:0.55px;word-spacing:0px;white-space:nowrap;">2,630,000</div>
<div style="position:absolute;left:89.0px;width:94px;text-align:center;top:944.4px;font-size:17.2px;line-height:17.2px;color:#2e2e2e;font-weight:normal;letter-spacing:0px;word-spacing:0px;white-space:nowrap;">Шүүлт</div>
<div style="position:absolute;left:412.5px;width:40px;text-align:center;top:944.4px;font-size:17.2px;line-height:17.2px;color:#333333;font-weight:normal;letter-spacing:0px;word-spacing:0px;white-space:nowrap;">1</div>
<div style="position:absolute;left:444.5px;width:120px;text-align:right;top:944.4px;font-size:17.2px;line-height:17.2px;color:#333333;font-weight:normal;letter-spacing:0.25px;word-spacing:0px;white-space:nowrap;">1/15/2019</div>
<div style="position:absolute;left:620.0px;top:944.4px;font-size:17.2px;line-height:17.2px;color:#333333;font-weight:normal;letter-spacing:0px;word-spacing:3px;white-space:nowrap;">Зарлагын гүйлгээний хураамж</div>
<div style="position:absolute;left:994.0px;top:944.4px;font-size:17.2px;line-height:17.2px;color:#333333;font-weight:normal;letter-spacing:0.1px;word-spacing:0px;white-space:nowrap;">Шимтгэл</div>
<div style="position:absolute;left:1082.0px;top:944.4px;font-size:17.2px;line-height:17.2px;color:#333333;font-weight:normal;letter-spacing:0.1px;word-spacing:0px;white-space:nowrap;">Хаан</div>
<div style="position:absolute;left:1186.5px;width:160px;text-align:center;top:944.4px;font-size:17.2px;line-height:17.2px;color:#333333;font-weight:normal;letter-spacing:0.55px;word-spacing:0px;white-space:nowrap;">300</div>
<div style="position:absolute;left:89.0px;width:94px;text-align:center;top:981.5px;font-size:17.2px;line-height:17.2px;color:#2e2e2e;font-weight:normal;letter-spacing:0px;word-spacing:0px;white-space:nowrap;">Шүүлт</div>
<div style="position:absolute;left:412.5px;width:40px;text-align:center;top:981.5px;font-size:17.2px;line-height:17.2px;color:#333333;font-weight:normal;letter-spacing:0px;word-spacing:0px;white-space:nowrap;">1</div>
<div style="position:absolute;left:444.5px;width:120px;text-align:right;top:993.6px;font-size:17.2px;line-height:17.2px;color:#333333;font-weight:normal;letter-spacing:0.25px;word-spacing:0px;white-space:nowrap;">1/15/2019</div>
<div style="position:absolute;left:620.0px;top:993.6px;font-size:17.2px;line-height:17.2px;color:#333333;font-weight:normal;letter-spacing:0px;word-spacing:3px;white-space:nowrap;">Энэрэл Содбилэг /Сургалтын төлбөр /</div>
<div style="position:absolute;left:994.0px;top:993.6px;font-size:17.2px;line-height:17.2px;color:#333333;font-weight:normal;letter-spacing:0.1px;word-spacing:0px;white-space:nowrap;">Хаан</div>
<div style="position:absolute;left:1082.0px;top:993.6px;font-size:17.2px;line-height:17.2px;color:#333333;font-weight:normal;letter-spacing:0.1px;word-spacing:0px;white-space:nowrap;">Борлуулалт</div>
<div style="position:absolute;left:1186.5px;width:160px;text-align:center;top:993.6px;font-size:17.2px;line-height:17.2px;color:#333333;font-weight:normal;letter-spacing:0.55px;word-spacing:0px;white-space:nowrap;">532,000</div>
<div style="position:absolute;left:89.0px;width:94px;text-align:center;top:1018.7px;font-size:17.2px;line-height:17.2px;color:#2e2e2e;font-weight:normal;letter-spacing:0px;word-spacing:0px;white-space:nowrap;">Шүүлт</div>
<div style="position:absolute;left:412.5px;width:40px;text-align:center;top:1018.7px;font-size:17.2px;line-height:17.2px;color:#333333;font-weight:normal;letter-spacing:0px;word-spacing:0px;white-space:nowrap;">1</div>
<div style="position:absolute;left:444.5px;width:120px;text-align:right;top:1018.7px;font-size:17.2px;line-height:17.2px;color:#333333;font-weight:normal;letter-spacing:0.25px;word-spacing:0px;white-space:nowrap;">1/17/2019</div>
<div style="position:absolute;left:620.0px;top:1018.7px;font-size:17.2px;line-height:17.2px;color:#333333;font-weight:normal;letter-spacing:0px;word-spacing:3px;white-space:nowrap;">Хантушиг /Сургалтын төлбөр /</div>
<div style="position:absolute;left:994.0px;top:1018.7px;font-size:17.2px;line-height:17.2px;color:#333333;font-weight:normal;letter-spacing:0.1px;word-spacing:0px;white-space:nowrap;">Хаан</div>
<div style="position:absolute;left:1082.0px;top:1018.7px;font-size:17.2px;line-height:17.2px;color:#333333;font-weight:normal;letter-spacing:0.1px;word-spacing:0px;white-space:nowrap;">Борлуулалт</div>
<div style="position:absolute;left:1186.5px;width:160px;text-align:center;top:1018.7px;font-size:17.2px;line-height:17.2px;color:#333333;font-weight:normal;letter-spacing:0.55px;word-spacing:0px;white-space:nowrap;">280,000</div>
</div>
<div style="position:absolute;left:1184.0px;top:840.2px;width:161.5px;height:47.2px;border:2px solid #217346;border-right-width:2.5px;"></div>
<div style="position:absolute;left:1344.5px;top:886.9px;width:7.0px;height:7.0px;background:#217346;border:1px solid #fff;"></div>
<div style="position:absolute;left:1153px;top:360px;width:114px;height:115px;border-radius:50%;background:rgba(255,255,30,0.86);box-shadow:0 0 2px 2px rgba(255,255,90,0.45);"></div>
<svg style="position:absolute;left:1199px;top:406px" width="22" height="22"><path d="M8,2 h6 v6 h6 v6 h-6 v6 h-6 v-6 h-6 v-6 h6 z" fill="#fff" stroke="#000" stroke-width="1.6"/></svg>
<div style="position:absolute;left:0.0px;top:1032.0px;width:1920.0px;height:35.5px;background:#e6e6e6;"></div>
<svg style="position:absolute;left:0;top:0" width="1920" height="1080"><line x1="0.00" y1="1032.50" x2="1920.00" y2="1032.50" stroke="#c6c6c6" stroke-width="1.2"/></svg>
<div style="position:absolute;left:33px;top:1044px;width:0;height:0;border-top:5px solid transparent;border-bottom:5px solid transparent;border-right:5px solid #c4c4c4;"></div>
<div style="position:absolute;left:68px;top:1044px;width:0;height:0;border-top:5px solid transparent;border-bottom:5px solid transparent;border-left:5px solid #c4c4c4;"></div>
<svg style="position:absolute;left:0;top:0" width="1920" height="1080"><line x1="124.50" y1="1036.00" x2="124.50" y2="1062.00" stroke="#a8a8a8" stroke-width="1.2"/><line x1="200.50" y1="1036.00" x2="200.50" y2="1062.00" stroke="#a8a8a8" stroke-width="1.2"/><line x1="537.50" y1="1036.00" x2="537.50" y2="1062.00" stroke="#a8a8a8" stroke-width="1.2"/><line x1="667.50" y1="1036.00" x2="667.50" y2="1062.00" stroke="#a8a8a8" stroke-width="1.2"/><line x1="748.50" y1="1036.00" x2="748.50" y2="1062.00" stroke="#a8a8a8" stroke-width="1.2"/><line x1="843.50" y1="1036.00" x2="843.50" y2="1062.00" stroke="#a8a8a8" stroke-width="1.2"/><line x1="920.50" y1="1036.00" x2="920.50" y2="1062.00" stroke="#a8a8a8" stroke-width="1.2"/></svg>
<div style="position:absolute;left:127.0px;top:1036.0px;width:70.0px;height:27.0px;background:#0000ff;"></div>
<div style="position:absolute;left:112.0px;width:100px;text-align:center;top:1035.2px;font-size:21px;line-height:21px;color:#fff;font-weight:normal;letter-spacing:0px;word-spacing:0px;white-space:nowrap;">Main</div>
<div style="position:absolute;left:193.0px;width:120px;text-align:center;top:1035.2px;font-size:21px;line-height:21px;color:#444;font-weight:normal;letter-spacing:0px;word-spacing:0px;white-space:nowrap;">togtmol</div>
<div style="position:absolute;left:308.0px;top:1031.0px;width:83.0px;height:32.0px;background:#ffffff;"></div>
<svg style="position:absolute;left:0;top:0" width="1920" height="1080"><line x1="308.00" y1="1062.00" x2="391.00" y2="1062.00" stroke="#217346" stroke-width="2.5"/></svg>
<div style="position:absolute;left:299.5px;width:100px;text-align:center;top:1035.2px;font-size:21px;line-height:21px;color:#217346;font-weight:bold;letter-spacing:0px;word-spacing:0px;white-space:nowrap;">jurnal</div>
<div style="position:absolute;left:394.5px;top:1036.0px;width:140.0px;height:26.0px;background:#ffff00;"></div>
<div style="position:absolute;left:384.5px;width:160px;text-align:center;top:1035.2px;font-size:21px;line-height:21px;color:#222;font-weight:normal;letter-spacing:0px;word-spacing:0px;white-space:nowrap;">tootsoonegt</div>
<div style="position:absolute;left:540.5px;top:1036.0px;width:124.5px;height:26.0px;background:#ffff00;"></div>
<div style="position:absolute;left:522.5px;width:160px;text-align:center;top:1035.2px;font-size:21px;line-height:21px;color:#222;font-weight:normal;letter-spacing:0px;word-spacing:0px;white-space:nowrap;">aj_husnegt</div>
<div style="position:absolute;left:657.0px;width:100px;text-align:center;top:1035.2px;font-size:21px;line-height:21px;color:#444;font-weight:normal;letter-spacing:0px;word-spacing:0px;white-space:nowrap;">tsalin</div>
<div style="position:absolute;left:744.0px;width:100px;text-align:center;top:1035.2px;font-size:21px;line-height:21px;color:#444;font-weight:normal;letter-spacing:0px;word-spacing:0px;white-space:nowrap;">jurnal1</div>
<div style="position:absolute;left:831.0px;width:100px;text-align:center;top:1035.2px;font-size:21px;line-height:21px;color:#444;font-weight:normal;letter-spacing:0px;word-spacing:0px;white-space:nowrap;">Pivot</div>
<div style="position:absolute;left:959.5px;top:1037.5px;width:23px;height:23px;border-radius:50%;border:1.2px solid #c8c8c8;"></div>
<div style="position:absolute;left:952.0px;width:40px;text-align:center;top:1038.4px;font-size:22px;line-height:22px;color:#c8c8c8;font-weight:normal;letter-spacing:0px;word-spacing:0px;white-space:nowrap;">+</div>
<div style="position:absolute;left:1646.5px;top:1040.5px;width:3.0px;height:3.0px;background:#9a9a9a;"></div>
<div style="position:absolute;left:1646.5px;top:1048.0px;width:3.0px;height:3.0px;background:#9a9a9a;"></div>
<div style="position:absolute;left:1646.5px;top:1054.5px;width:3.0px;height:3.0px;background:#9a9a9a;"></div>
<div style="position:absolute;left:1668px;top:1038.5px;width:22px;height:21px;background:#fff;border:1px solid #c6c6c6;"></div>
<div style="position:absolute;left:1675px;top:1044px;width:0;height:0;border-top:5.5px solid transparent;border-bottom:5.5px solid transparent;border-right:6px solid #606060;"></div>
<div style="position:absolute;left:1691px;top:1038.5px;width:240px;height:21px;background:#fff;border:1px solid #c6c6c6;"></div>
<div style="position:absolute;left:0.0px;top:1067.5px;width:1920.0px;height:12.5px;background:#f0f0f0;"></div>
<svg style="position:absolute;left:0;top:0" width="1920" height="1080"><line x1="0.00" y1="1067.50" x2="1920.00" y2="1067.50" stroke="#c6c6c6" stroke-width="1.2"/></svg>
<div style="position:absolute;left:10.5px;top:1077.9px;font-size:15.5px;line-height:15.5px;color:#222;font-weight:normal;letter-spacing:0.3px;word-spacing:0px;white-space:nowrap;">Ready</div>
<div style="position:absolute;left:75.0px;top:1077.9px;font-size:15.5px;line-height:15.5px;color:#222;font-weight:normal;letter-spacing:0.3px;word-spacing:0px;white-space:nowrap;">Calculate</div>
<div style="position:absolute;left:1734px;top:1073px;width:22px;height:14px;background:#555;border-radius:3px;"></div>
<div style="position:absolute;left:1760.0px;top:1075.1px;font-size:17px;line-height:17px;color:#222;font-weight:normal;letter-spacing:0.5px;word-spacing:0px;white-space:nowrap;">Display Settings</div>
<div style="position:absolute;left:1910px;top:1076px;width:10px;height:10px;border:1.2px solid #777;"></div>
</body></html>
